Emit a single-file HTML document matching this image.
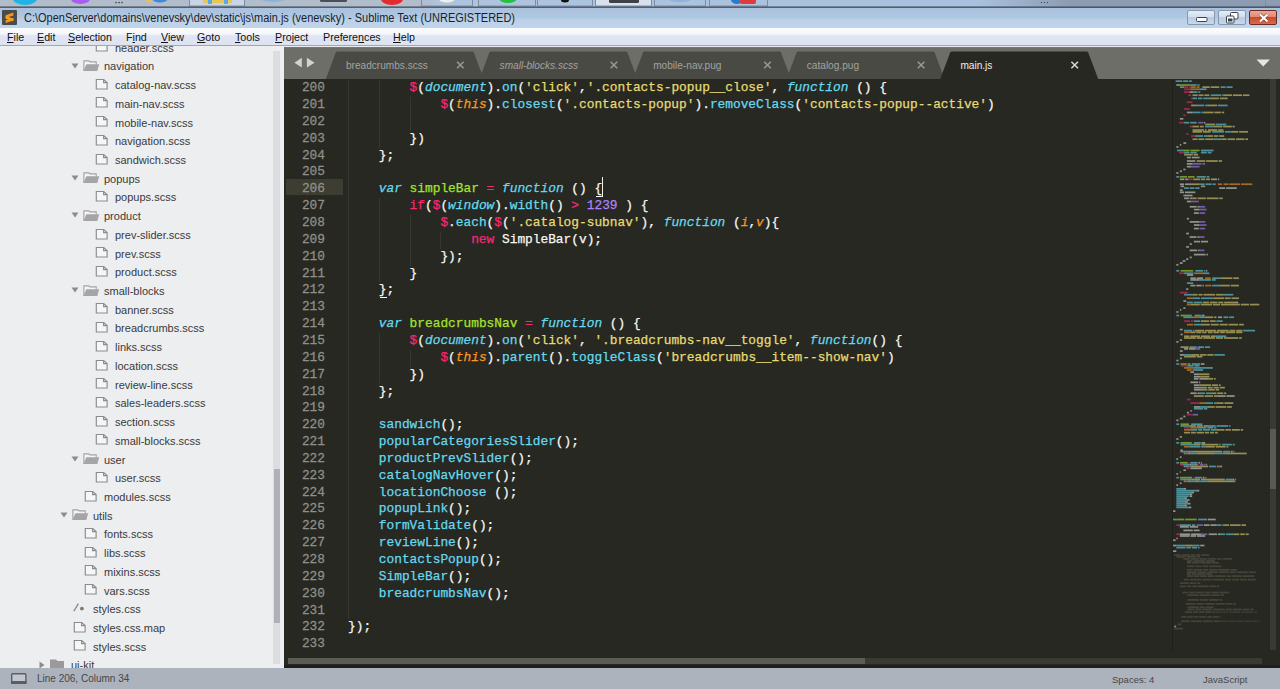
<!DOCTYPE html>
<html><head><meta charset="utf-8">
<style>
*{margin:0;padding:0;box-sizing:border-box}
html,body{width:1280px;height:689px;overflow:hidden;background:#272822;font-family:"Liberation Sans",sans-serif}
.a{position:absolute}
#taskbar{left:0;top:0;width:1280px;height:8px;background:linear-gradient(90deg,#b2bdcb 0,#b2bdcb 420px,#aec4de 440px,#a9c1de 980px,#8c9cb2 1070px,#8c9cb2 100%);overflow:hidden}
#title{left:0;top:8px;width:1280px;height:20px;background:linear-gradient(#a9c1dd,#b0c7e1 45%,#bcd1e8 60%,#c0d4ea)}
#title .t{left:24px;top:2.9px;font-size:12px;color:#1a1f2a;white-space:nowrap;line-height:15px;transform:scaleX(0.915);transform-origin:0 0}
#menu{left:0;top:28px;width:1280px;height:18px;background:linear-gradient(#fbfcfe,#f5f6fb 35%,#e2e6f3 45%,#dde2f1);border-bottom:1px solid #a3a7ae}
#menu span{position:absolute;top:2.4px;font-size:11.5px;line-height:14px;color:#111;white-space:nowrap;transform:scaleX(0.93);transform-origin:0 0}
#menu u{text-decoration:underline}
#side{left:0;top:46px;width:284px;height:622px;background:#edeef0;overflow:hidden}
#side .r{position:absolute;height:18.69px;line-height:18.69px;font-size:11px;color:#3a3a3a;white-space:nowrap}
#editor{left:284px;top:46px;width:996px;height:622px;background:#272822;overflow:hidden}
#tabs{left:0;top:0;width:996px;height:33px;background:#6b6b66}
#code{left:0;top:33px;width:996px;height:589px;background:#272822}
#status{left:0;top:668px;width:1280px;height:21px;background:#acb3bd}
#status span{position:absolute;top:4px;font-size:10px;line-height:13px;color:#474747;white-space:nowrap}
.ln{position:absolute;left:0;width:41px;text-align:right;font-family:"Liberation Mono",monospace;font-size:12.83px;line-height:16.85px;height:16.85px;color:#90908a;white-space:pre;transform:scaleY(1.04);-webkit-text-stroke:0.25px #90908a}
.cl{position:absolute;left:64px;font-family:"Liberation Mono",monospace;font-size:12.83px;line-height:16.85px;height:16.85px;color:#f8f8f2;white-space:pre;transform:scaleY(1.0)}
.cl span{-webkit-text-stroke:0.25px currentColor}
.tt{position:absolute;top:12.8px;font-size:10.1px;line-height:13px;white-space:nowrap}
.wb{position:absolute;top:10px;width:28px;height:15px;border:1px solid #8797ad;border-radius:2px;background:linear-gradient(#e4edf7,#d2dfee 45%,#b8cce3 50%,#c6d8ec)}
</style></head><body>
<div id="taskbar" class="a">
<svg class="a" style="left:0;top:0" width="1280" height="8" viewBox="0 0 1280 8">
<ellipse cx="25" cy="-2" rx="12.5" ry="7" fill="#20b4e4"/>
<ellipse cx="80.5" cy="-1" rx="9.5" ry="5" fill="#a95ef0"/>
<circle cx="116" cy="2.6" r="0.8" fill="#3a3f48"/><circle cx="119" cy="2.6" r="0.8" fill="#3a3f48"/><circle cx="122" cy="2.6" r="0.8" fill="#3a3f48"/>
<ellipse cx="149" cy="0" rx="3" ry="2.5" fill="#e8c050"/>
<ellipse cx="160" cy="-1" rx="7.5" ry="3.5" fill="#3a8ad8"/>
<rect x="189.5" y="-2" width="55" height="8" fill="#c8d5e4" stroke="#7d8ea4" stroke-width="1"/>
<rect x="203" y="0" width="29" height="3" fill="#e8c65a"/>
<rect x="208" y="0" width="4" height="4" fill="#5aa8e8"/><rect x="224" y="0" width="4" height="4" fill="#5aa8e8"/>
<ellipse cx="273" cy="-1" rx="12" ry="3" fill="#8fb2d6"/>
<rect x="320" y="-2" width="27" height="4" rx="1.5" fill="#4a4e56"/>
<ellipse cx="392" cy="-1" rx="11" ry="6" fill="#e52b2b"/>
<rect x="421.5" y="-2" width="51" height="8" fill="none" stroke="#7d8ea4"/>
<ellipse cx="447" cy="-1" rx="8" ry="3.5" fill="#eeeeee"/>
<rect x="478.5" y="-2" width="57" height="8" fill="none" stroke="#7d8ea4"/>
<ellipse cx="508" cy="-1" rx="8.5" ry="4" fill="#22c240"/>
<rect x="537.5" y="-2" width="55" height="8" fill="none" stroke="#7d8ea4"/>
<ellipse cx="565" cy="0" rx="4" ry="2.5" fill="#111"/>
<rect x="595.5" y="-2" width="56" height="8" fill="#d9e2ec" stroke="#7d8ea4"/>
<rect x="609" y="-2" width="30" height="5" rx="1.5" fill="#3e4248"/>
<rect x="654.5" y="-2" width="51" height="8" fill="none" stroke="#7d8ea4"/>
<ellipse cx="680" cy="-1" rx="12" ry="3" fill="#8fb2d6"/>
<rect x="709.5" y="-2" width="58" height="8" fill="none" stroke="#7d8ea4"/>
<ellipse cx="737" cy="0" rx="6" ry="4" fill="#2a7bd0"/>
<rect x="740" y="-2" width="16" height="6" rx="2" fill="#e03a3a"/>
<circle cx="1041.5" cy="2.6" r="0.7" fill="#3a3f48"/><circle cx="1044.5" cy="2.6" r="0.7" fill="#3a3f48"/><circle cx="1047.5" cy="2.6" r="0.7" fill="#3a3f48"/>
<rect x="1265.5" y="-2" width="20" height="8" fill="none" stroke="#7d8ea4"/>
<rect x="0" y="6.5" width="1280" height="1.3" fill="#3f4855"/>
</svg>
</div>
<div id="title" class="a">
<svg class="a" style="left:2px;top:1.5px" width="15" height="15" viewBox="0 0 15 15"><rect x="0" y="0" width="15" height="15" rx="1" fill="#4b4b4b"/><path d="M3.6 5.2L11.4 2.6V5.4L3.6 8Z" fill="#f29a1c"/><path d="M3.6 6.2L11.4 8.6V11.2L3.6 8.8Z" fill="#f5a623"/><path d="M3.6 10.2L11.4 7.8V10.4L3.6 13Z" fill="#f29a1c"/></svg>
<div class="a t">C:\OpenServer\domains\venevsky\dev\static\js\main.js (venevsky) - Sublime Text (UNREGISTERED)</div>
<div class="wb" style="left:1187px;top:2px"><svg class="a" style="left:8px;top:6px" width="12" height="5"><rect x="0.5" y="0.5" width="10.5" height="4" rx="1" fill="#fff" stroke="#3b4250"/></svg></div>
<div class="wb" style="left:1218px;top:2px"><svg class="a" style="left:7px;top:1px" width="13" height="12"><rect x="4.5" y="0.5" width="7.5" height="6.5" rx="1" fill="#fff" stroke="#3b4250"/><rect x="0.5" y="4" width="7.5" height="7" rx="1" fill="#fff" stroke="#3b4250"/><rect x="2" y="6.5" width="4.5" height="3" fill="#3b4250"/></svg></div>
<div class="wb" style="left:1249px;top:2px;border-color:#6b2a22;background:linear-gradient(#eca898,#e08a74 45%,#cc4a2c 50%,#d86a4a)"><svg class="a" style="left:8px;top:2px" width="12" height="10"><path d="M2 1.5L9.5 8.5M9.5 1.5L2 8.5" stroke="#6a3a30" stroke-width="3.4" stroke-opacity="0.7"/><path d="M2 1.5L9.5 8.5M9.5 1.5L2 8.5" stroke="#fff" stroke-width="2"/></svg></div>
</div>
<div id="menu" class="a">
<span style="left:7px"><u>F</u>ile</span>
<span style="left:37px"><u>E</u>dit</span>
<span style="left:68px"><u>S</u>election</span>
<span style="left:126px">F<u>i</u>nd</span>
<span style="left:161px"><u>V</u>iew</span>
<span style="left:197px"><u>G</u>oto</span>
<span style="left:235px"><u>T</u>ools</span>
<span style="left:275px"><u>P</u>roject</span>
<span style="left:323px">Prefere<u>n</u>ces</span>
<span style="left:393px"><u>H</u>elp</span>
</div>
<div id="side" class="a">
<svg class="a" width="14" height="12" viewBox="0 0 14 12" style="left:95px;top:-4.7px"><path d="M1.3 0.5H8.6L12.1 3.6V10H1.3Z" fill="#f6f6f6" stroke="#8c8c8c" stroke-width="1.15"/><path d="M8.6 0.5V3.6H12.1" fill="none" stroke="#8c8c8c" stroke-width="1.15"/></svg>
<div class="r" style="left:115px;top:-7.31px">header.scss</div>
<svg class="a" width="8" height="6" viewBox="0 0 8 6" style="left:71px;top:16.52px"><path d="M0.5 0.5H7.5L4 5.5Z" fill="#8c8c8c"/></svg>
<svg class="a" width="17" height="12" viewBox="0 0 17 12" style="left:83px;top:13.92px"><path d="M0.9 11V0.9H5.9L6.9 1.9H13.2V4.5" fill="#f4f4f4" stroke="#a2a2a4" stroke-width="1.1"/><path d="M3.3 4.3H16.2L14.3 11.1H0.5Z" fill="#a5a5a8"/></svg>
<div class="r" style="left:104px;top:11.41px">navigation</div>
<svg class="a" width="14" height="12" viewBox="0 0 14 12" style="left:95px;top:32.74px"><path d="M1.3 0.5H8.6L12.1 3.6V10H1.3Z" fill="#f6f6f6" stroke="#8c8c8c" stroke-width="1.15"/><path d="M8.6 0.5V3.6H12.1" fill="none" stroke="#8c8c8c" stroke-width="1.15"/></svg>
<div class="r" style="left:115px;top:30.13px">catalog-nav.scss</div>
<svg class="a" width="14" height="12" viewBox="0 0 14 12" style="left:95px;top:51.46px"><path d="M1.3 0.5H8.6L12.1 3.6V10H1.3Z" fill="#f6f6f6" stroke="#8c8c8c" stroke-width="1.15"/><path d="M8.6 0.5V3.6H12.1" fill="none" stroke="#8c8c8c" stroke-width="1.15"/></svg>
<div class="r" style="left:115px;top:48.85px">main-nav.scss</div>
<svg class="a" width="14" height="12" viewBox="0 0 14 12" style="left:95px;top:70.18px"><path d="M1.3 0.5H8.6L12.1 3.6V10H1.3Z" fill="#f6f6f6" stroke="#8c8c8c" stroke-width="1.15"/><path d="M8.6 0.5V3.6H12.1" fill="none" stroke="#8c8c8c" stroke-width="1.15"/></svg>
<div class="r" style="left:115px;top:67.57px">mobile-nav.scss</div>
<svg class="a" width="14" height="12" viewBox="0 0 14 12" style="left:95px;top:88.9px"><path d="M1.3 0.5H8.6L12.1 3.6V10H1.3Z" fill="#f6f6f6" stroke="#8c8c8c" stroke-width="1.15"/><path d="M8.6 0.5V3.6H12.1" fill="none" stroke="#8c8c8c" stroke-width="1.15"/></svg>
<div class="r" style="left:115px;top:86.29px">navigation.scss</div>
<svg class="a" width="14" height="12" viewBox="0 0 14 12" style="left:95px;top:107.62px"><path d="M1.3 0.5H8.6L12.1 3.6V10H1.3Z" fill="#f6f6f6" stroke="#8c8c8c" stroke-width="1.15"/><path d="M8.6 0.5V3.6H12.1" fill="none" stroke="#8c8c8c" stroke-width="1.15"/></svg>
<div class="r" style="left:115px;top:105.01px">sandwich.scss</div>
<svg class="a" width="8" height="6" viewBox="0 0 8 6" style="left:71px;top:128.84px"><path d="M0.5 0.5H7.5L4 5.5Z" fill="#8c8c8c"/></svg>
<svg class="a" width="17" height="12" viewBox="0 0 17 12" style="left:83px;top:126.24px"><path d="M0.9 11V0.9H5.9L6.9 1.9H13.2V4.5" fill="#f4f4f4" stroke="#a2a2a4" stroke-width="1.1"/><path d="M3.3 4.3H16.2L14.3 11.1H0.5Z" fill="#a5a5a8"/></svg>
<div class="r" style="left:104px;top:123.73px">popups</div>
<svg class="a" width="14" height="12" viewBox="0 0 14 12" style="left:95px;top:145.06px"><path d="M1.3 0.5H8.6L12.1 3.6V10H1.3Z" fill="#f6f6f6" stroke="#8c8c8c" stroke-width="1.15"/><path d="M8.6 0.5V3.6H12.1" fill="none" stroke="#8c8c8c" stroke-width="1.15"/></svg>
<div class="r" style="left:115px;top:142.45px">popups.scss</div>
<svg class="a" width="8" height="6" viewBox="0 0 8 6" style="left:71px;top:166.28px"><path d="M0.5 0.5H7.5L4 5.5Z" fill="#8c8c8c"/></svg>
<svg class="a" width="17" height="12" viewBox="0 0 17 12" style="left:83px;top:163.68px"><path d="M0.9 11V0.9H5.9L6.9 1.9H13.2V4.5" fill="#f4f4f4" stroke="#a2a2a4" stroke-width="1.1"/><path d="M3.3 4.3H16.2L14.3 11.1H0.5Z" fill="#a5a5a8"/></svg>
<div class="r" style="left:104px;top:161.17px">product</div>
<svg class="a" width="14" height="12" viewBox="0 0 14 12" style="left:95px;top:182.5px"><path d="M1.3 0.5H8.6L12.1 3.6V10H1.3Z" fill="#f6f6f6" stroke="#8c8c8c" stroke-width="1.15"/><path d="M8.6 0.5V3.6H12.1" fill="none" stroke="#8c8c8c" stroke-width="1.15"/></svg>
<div class="r" style="left:115px;top:179.89px">prev-slider.scss</div>
<svg class="a" width="14" height="12" viewBox="0 0 14 12" style="left:95px;top:201.22px"><path d="M1.3 0.5H8.6L12.1 3.6V10H1.3Z" fill="#f6f6f6" stroke="#8c8c8c" stroke-width="1.15"/><path d="M8.6 0.5V3.6H12.1" fill="none" stroke="#8c8c8c" stroke-width="1.15"/></svg>
<div class="r" style="left:115px;top:198.61px">prev.scss</div>
<svg class="a" width="14" height="12" viewBox="0 0 14 12" style="left:95px;top:219.94px"><path d="M1.3 0.5H8.6L12.1 3.6V10H1.3Z" fill="#f6f6f6" stroke="#8c8c8c" stroke-width="1.15"/><path d="M8.6 0.5V3.6H12.1" fill="none" stroke="#8c8c8c" stroke-width="1.15"/></svg>
<div class="r" style="left:115px;top:217.33px">product.scss</div>
<svg class="a" width="8" height="6" viewBox="0 0 8 6" style="left:71px;top:241.16px"><path d="M0.5 0.5H7.5L4 5.5Z" fill="#8c8c8c"/></svg>
<svg class="a" width="17" height="12" viewBox="0 0 17 12" style="left:83px;top:238.56px"><path d="M0.9 11V0.9H5.9L6.9 1.9H13.2V4.5" fill="#f4f4f4" stroke="#a2a2a4" stroke-width="1.1"/><path d="M3.3 4.3H16.2L14.3 11.1H0.5Z" fill="#a5a5a8"/></svg>
<div class="r" style="left:104px;top:236.05px">small-blocks</div>
<svg class="a" width="14" height="12" viewBox="0 0 14 12" style="left:95px;top:257.38px"><path d="M1.3 0.5H8.6L12.1 3.6V10H1.3Z" fill="#f6f6f6" stroke="#8c8c8c" stroke-width="1.15"/><path d="M8.6 0.5V3.6H12.1" fill="none" stroke="#8c8c8c" stroke-width="1.15"/></svg>
<div class="r" style="left:115px;top:254.77px">banner.scss</div>
<svg class="a" width="14" height="12" viewBox="0 0 14 12" style="left:95px;top:276.1px"><path d="M1.3 0.5H8.6L12.1 3.6V10H1.3Z" fill="#f6f6f6" stroke="#8c8c8c" stroke-width="1.15"/><path d="M8.6 0.5V3.6H12.1" fill="none" stroke="#8c8c8c" stroke-width="1.15"/></svg>
<div class="r" style="left:115px;top:273.49px">breadcrumbs.scss</div>
<svg class="a" width="14" height="12" viewBox="0 0 14 12" style="left:95px;top:294.82px"><path d="M1.3 0.5H8.6L12.1 3.6V10H1.3Z" fill="#f6f6f6" stroke="#8c8c8c" stroke-width="1.15"/><path d="M8.6 0.5V3.6H12.1" fill="none" stroke="#8c8c8c" stroke-width="1.15"/></svg>
<div class="r" style="left:115px;top:292.21px">links.scss</div>
<svg class="a" width="14" height="12" viewBox="0 0 14 12" style="left:95px;top:313.54px"><path d="M1.3 0.5H8.6L12.1 3.6V10H1.3Z" fill="#f6f6f6" stroke="#8c8c8c" stroke-width="1.15"/><path d="M8.6 0.5V3.6H12.1" fill="none" stroke="#8c8c8c" stroke-width="1.15"/></svg>
<div class="r" style="left:115px;top:310.93px">location.scss</div>
<svg class="a" width="14" height="12" viewBox="0 0 14 12" style="left:95px;top:332.26px"><path d="M1.3 0.5H8.6L12.1 3.6V10H1.3Z" fill="#f6f6f6" stroke="#8c8c8c" stroke-width="1.15"/><path d="M8.6 0.5V3.6H12.1" fill="none" stroke="#8c8c8c" stroke-width="1.15"/></svg>
<div class="r" style="left:115px;top:329.65px">review-line.scss</div>
<svg class="a" width="14" height="12" viewBox="0 0 14 12" style="left:95px;top:350.98px"><path d="M1.3 0.5H8.6L12.1 3.6V10H1.3Z" fill="#f6f6f6" stroke="#8c8c8c" stroke-width="1.15"/><path d="M8.6 0.5V3.6H12.1" fill="none" stroke="#8c8c8c" stroke-width="1.15"/></svg>
<div class="r" style="left:115px;top:348.37px">sales-leaders.scss</div>
<svg class="a" width="14" height="12" viewBox="0 0 14 12" style="left:95px;top:369.7px"><path d="M1.3 0.5H8.6L12.1 3.6V10H1.3Z" fill="#f6f6f6" stroke="#8c8c8c" stroke-width="1.15"/><path d="M8.6 0.5V3.6H12.1" fill="none" stroke="#8c8c8c" stroke-width="1.15"/></svg>
<div class="r" style="left:115px;top:367.09px">section.scss</div>
<svg class="a" width="14" height="12" viewBox="0 0 14 12" style="left:95px;top:388.42px"><path d="M1.3 0.5H8.6L12.1 3.6V10H1.3Z" fill="#f6f6f6" stroke="#8c8c8c" stroke-width="1.15"/><path d="M8.6 0.5V3.6H12.1" fill="none" stroke="#8c8c8c" stroke-width="1.15"/></svg>
<div class="r" style="left:115px;top:385.81px">small-blocks.scss</div>
<svg class="a" width="8" height="6" viewBox="0 0 8 6" style="left:71px;top:409.64px"><path d="M0.5 0.5H7.5L4 5.5Z" fill="#8c8c8c"/></svg>
<svg class="a" width="17" height="12" viewBox="0 0 17 12" style="left:83px;top:407.04px"><path d="M0.9 11V0.9H5.9L6.9 1.9H13.2V4.5" fill="#f4f4f4" stroke="#a2a2a4" stroke-width="1.1"/><path d="M3.3 4.3H16.2L14.3 11.1H0.5Z" fill="#a5a5a8"/></svg>
<div class="r" style="left:104px;top:404.53px">user</div>
<svg class="a" width="14" height="12" viewBox="0 0 14 12" style="left:95px;top:425.86px"><path d="M1.3 0.5H8.6L12.1 3.6V10H1.3Z" fill="#f6f6f6" stroke="#8c8c8c" stroke-width="1.15"/><path d="M8.6 0.5V3.6H12.1" fill="none" stroke="#8c8c8c" stroke-width="1.15"/></svg>
<div class="r" style="left:115px;top:423.25px">user.scss</div>
<svg class="a" width="14" height="12" viewBox="0 0 14 12" style="left:84px;top:444.58px"><path d="M1.3 0.5H8.6L12.1 3.6V10H1.3Z" fill="#f6f6f6" stroke="#8c8c8c" stroke-width="1.15"/><path d="M8.6 0.5V3.6H12.1" fill="none" stroke="#8c8c8c" stroke-width="1.15"/></svg>
<div class="r" style="left:104px;top:441.97px">modules.scss</div>
<svg class="a" width="8" height="6" viewBox="0 0 8 6" style="left:60px;top:465.8px"><path d="M0.5 0.5H7.5L4 5.5Z" fill="#8c8c8c"/></svg>
<svg class="a" width="17" height="12" viewBox="0 0 17 12" style="left:72px;top:463.2px"><path d="M0.9 11V0.9H5.9L6.9 1.9H13.2V4.5" fill="#f4f4f4" stroke="#a2a2a4" stroke-width="1.1"/><path d="M3.3 4.3H16.2L14.3 11.1H0.5Z" fill="#a5a5a8"/></svg>
<div class="r" style="left:93px;top:460.69px">utils</div>
<svg class="a" width="14" height="12" viewBox="0 0 14 12" style="left:84px;top:482.02px"><path d="M1.3 0.5H8.6L12.1 3.6V10H1.3Z" fill="#f6f6f6" stroke="#8c8c8c" stroke-width="1.15"/><path d="M8.6 0.5V3.6H12.1" fill="none" stroke="#8c8c8c" stroke-width="1.15"/></svg>
<div class="r" style="left:104px;top:479.41px">fonts.scss</div>
<svg class="a" width="14" height="12" viewBox="0 0 14 12" style="left:84px;top:500.74px"><path d="M1.3 0.5H8.6L12.1 3.6V10H1.3Z" fill="#f6f6f6" stroke="#8c8c8c" stroke-width="1.15"/><path d="M8.6 0.5V3.6H12.1" fill="none" stroke="#8c8c8c" stroke-width="1.15"/></svg>
<div class="r" style="left:104px;top:498.13px">libs.scss</div>
<svg class="a" width="14" height="12" viewBox="0 0 14 12" style="left:84px;top:519.46px"><path d="M1.3 0.5H8.6L12.1 3.6V10H1.3Z" fill="#f6f6f6" stroke="#8c8c8c" stroke-width="1.15"/><path d="M8.6 0.5V3.6H12.1" fill="none" stroke="#8c8c8c" stroke-width="1.15"/></svg>
<div class="r" style="left:104px;top:516.85px">mixins.scss</div>
<svg class="a" width="14" height="12" viewBox="0 0 14 12" style="left:84px;top:538.18px"><path d="M1.3 0.5H8.6L12.1 3.6V10H1.3Z" fill="#f6f6f6" stroke="#8c8c8c" stroke-width="1.15"/><path d="M8.6 0.5V3.6H12.1" fill="none" stroke="#8c8c8c" stroke-width="1.15"/></svg>
<div class="r" style="left:104px;top:535.57px">vars.scss</div>
<svg class="a" width="12" height="12" viewBox="0 0 12 12" style="left:73px;top:556.40px"><path d="M0.8 9.2L5.4 1.7" stroke="#8a8a8a" stroke-width="1.3"/><circle cx="8.9" cy="6.6" r="1.9" fill="#7a7a7a"/></svg>
<div class="r" style="left:93px;top:554.29px">styles.css</div>
<svg class="a" width="14" height="12" viewBox="0 0 14 12" style="left:73px;top:575.62px"><path d="M1.3 0.5H8.6L12.1 3.6V10H1.3Z" fill="#f6f6f6" stroke="#8c8c8c" stroke-width="1.15"/><path d="M8.6 0.5V3.6H12.1" fill="none" stroke="#8c8c8c" stroke-width="1.15"/></svg>
<div class="r" style="left:93px;top:573.01px">styles.css.map</div>
<svg class="a" width="14" height="12" viewBox="0 0 14 12" style="left:73px;top:594.34px"><path d="M1.3 0.5H8.6L12.1 3.6V10H1.3Z" fill="#f6f6f6" stroke="#8c8c8c" stroke-width="1.15"/><path d="M8.6 0.5V3.6H12.1" fill="none" stroke="#8c8c8c" stroke-width="1.15"/></svg>
<div class="r" style="left:93px;top:591.73px">styles.scss</div>
<svg class="a" width="6" height="8" viewBox="0 0 6 8" style="left:39px;top:614.56px"><path d="M0.5 0.5V7.5L5.5 4Z" fill="#8c8c8c"/></svg>
<svg class="a" width="15" height="12" viewBox="0 0 15 12" style="left:50px;top:612.56px"><path d="M0 0.5H6L7.5 2H14V12H0Z" fill="#9a9a9a"/></svg>
<div class="r" style="left:71px;top:610.45px">ui-kit</div>
<div class="a" style="left:273px;top:4.5px;width:7px;height:613px;background:#dcdde1"></div>
<div class="a" style="left:273.5px;top:423px;width:6px;height:154px;background:#afb1b6"></div>
</div>
<div id="editor" class="a">
<div id="tabs" class="a">
<svg class="a" style="left:0;top:0" width="996" height="33" viewBox="0 0 996 33">
<rect x="0" y="0" width="996" height="33" fill="#6e6e68"/>
<rect x="0" y="0" width="996" height="1" fill="#e9ebef"/><rect x="0" y="1" width="996" height="0.8" fill="#7a7b77"/>
<path d="M10.4 16.8L17.8 11.8V21.4Z" fill="#d2d2ce"/>
<path d="M30.6 16.8L22.9 11.8V21.4Z" fill="#d2d2ce"/>
<path d="M41.8 33L51.8 6.6Q52.3 5.4 53.8 5.4H187.8Q189.3 5.4 189.8 6.6L199.8 33Z" fill="#4a4a45"/>
<path d="M173.0 15.7L179.6 22.3M179.6 15.7L173.0 22.3" stroke="#9a9a95" stroke-width="1.5"/>
<path d="M195.4 33L205.4 6.6Q205.9 5.4 207.4 5.4H341.4Q342.9 5.4 343.4 6.6L353.4 33Z" fill="#4a4a45"/>
<path d="M326.6 15.7L333.2 22.3M333.2 15.7L326.6 22.3" stroke="#9a9a95" stroke-width="1.5"/>
<path d="M349.0 33L359.0 6.6Q359.5 5.4 361.0 5.4H495.0Q496.5 5.4 497.0 6.6L507.0 33Z" fill="#4a4a45"/>
<path d="M480.2 15.7L486.8 22.3M486.8 15.7L480.2 22.3" stroke="#9a9a95" stroke-width="1.5"/>
<path d="M502.6 33L512.6 6.6Q513.1 5.4 514.6 5.4H648.6Q650.1 5.4 650.6 6.6L660.6 33Z" fill="#4a4a45"/>
<path d="M633.8 15.7L640.4 22.3M640.4 15.7L633.8 22.3" stroke="#9a9a95" stroke-width="1.5"/>
<path d="M656.2 33L666.2 6.6Q666.7 5.4 668.2 5.4H802.2Q803.7 5.4 804.2 6.6L814.2 33Z" fill="#272822"/>
<path d="M787.4 15.7L794.0 22.3M794.0 15.7L787.4 22.3" stroke="#d8d8d4" stroke-width="1.5"/>
<path d="M972.5 13.5H986L979.2 20.5Z" fill="#e6e6e2"/>
</svg>
<div class="tt" style="left:62.0px;color:#a3a39e">breadcrumbs.scss</div>
<div class="tt" style="left:215.6px;color:#a3a39e;font-style:italic">small-blocks.scss</div>
<div class="tt" style="left:369.2px;color:#a3a39e">mobile-nav.pug</div>
<div class="tt" style="left:522.8px;color:#a3a39e">catalog.pug</div>
<div class="tt" style="left:676.4px;color:#f0f0ec">main.js</div>
</div>
<div id="code" class="a"></div>
<div class="a" style="left:64.0px;top:34.20px;width:1px;height:539.20px;background:#363731"></div>
<div class="a" style="left:94.8px;top:34.20px;width:1px;height:67.40px;background:#363731"></div>
<div class="a" style="left:94.8px;top:152.15px;width:1px;height:84.25px;background:#363731"></div>
<div class="a" style="left:94.8px;top:286.95px;width:1px;height:50.55px;background:#363731"></div>
<div class="a" style="left:125.6px;top:51.05px;width:1px;height:33.70px;background:#363731"></div>
<div class="a" style="left:125.6px;top:169.00px;width:1px;height:50.55px;background:#363731"></div>
<div class="a" style="left:125.6px;top:303.80px;width:1px;height:16.85px;background:#363731"></div>
<div class="a" style="left:156.4px;top:185.85px;width:1px;height:16.85px;background:#363731"></div>
<div class="ln" style="top:34.20px">200</div>
<div class="cl" style="top:34.20px"><span style="color:#f8f8f2">        </span><span style="color:#f92672">$</span><span style="color:#f8f8f2">(</span><span style="color:#66d9ef;font-style:italic">document</span><span style="color:#f8f8f2">).</span><span style="color:#66d9ef">on</span><span style="color:#f8f8f2">(</span><span style="color:#e6db74">&#x27;click&#x27;</span><span style="color:#f8f8f2">,</span><span style="color:#e6db74">&#x27;.contacts-popup__close&#x27;</span><span style="color:#f8f8f2">, </span><span style="color:#66d9ef;font-style:italic">function</span><span style="color:#f8f8f2"> () {</span></div>
<div class="ln" style="top:51.05px">201</div>
<div class="cl" style="top:51.05px"><span style="color:#f8f8f2">            </span><span style="color:#f92672">$</span><span style="color:#f8f8f2">(</span><span style="color:#fd971f;font-style:italic">this</span><span style="color:#f8f8f2">).</span><span style="color:#66d9ef">closest</span><span style="color:#f8f8f2">(</span><span style="color:#e6db74">&#x27;.contacts-popup&#x27;</span><span style="color:#f8f8f2">).</span><span style="color:#66d9ef">removeClass</span><span style="color:#f8f8f2">(</span><span style="color:#e6db74">&#x27;contacts-popup--active&#x27;</span><span style="color:#f8f8f2">)</span></div>
<div class="ln" style="top:67.90px">202</div>
<div class="cl" style="top:67.90px"></div>
<div class="ln" style="top:84.75px">203</div>
<div class="cl" style="top:84.75px"><span style="color:#f8f8f2">        })</span></div>
<div class="ln" style="top:101.60px">204</div>
<div class="cl" style="top:101.60px"><span style="color:#f8f8f2">    };</span></div>
<div class="ln" style="top:118.45px">205</div>
<div class="cl" style="top:118.45px"></div>
<div class="a" style="left:1.5px;top:132.80px;width:57.5px;height:16.6px;background:#3e3d32"></div>
<div class="ln" style="top:135.30px">206</div>
<div class="cl" style="top:135.30px"><span style="color:#f8f8f2">    </span><span style="color:#66d9ef;font-style:italic">var</span><span style="color:#f8f8f2"> </span><span style="color:#a6e22e">simpleBar</span><span style="color:#f8f8f2"> </span><span style="color:#f92672">=</span><span style="color:#f8f8f2"> </span><span style="color:#66d9ef;font-style:italic">function</span><span style="color:#f8f8f2"> () {</span></div>
<div class="ln" style="top:152.15px">207</div>
<div class="cl" style="top:152.15px"><span style="color:#f8f8f2">        </span><span style="color:#f92672">if</span><span style="color:#f8f8f2">(</span><span style="color:#f92672">$</span><span style="color:#f8f8f2">(</span><span style="color:#66d9ef;font-style:italic">window</span><span style="color:#f8f8f2">).</span><span style="color:#66d9ef">width</span><span style="color:#f8f8f2">() </span><span style="color:#f92672">&gt;</span><span style="color:#f8f8f2"> </span><span style="color:#ae81ff">1239</span><span style="color:#f8f8f2"> ) {</span></div>
<div class="ln" style="top:169.00px">208</div>
<div class="cl" style="top:169.00px"><span style="color:#f8f8f2">            </span><span style="color:#f92672">$</span><span style="color:#f8f8f2">.</span><span style="color:#66d9ef">each</span><span style="color:#f8f8f2">(</span><span style="color:#f92672">$</span><span style="color:#f8f8f2">(</span><span style="color:#e6db74">&#x27;.catalog-subnav&#x27;</span><span style="color:#f8f8f2">), </span><span style="color:#66d9ef;font-style:italic">function</span><span style="color:#f8f8f2"> (</span><span style="color:#fd971f;font-style:italic">i</span><span style="color:#f8f8f2">,</span><span style="color:#fd971f;font-style:italic">v</span><span style="color:#f8f8f2">){</span></div>
<div class="ln" style="top:185.85px">209</div>
<div class="cl" style="top:185.85px"><span style="color:#f8f8f2">                </span><span style="color:#f92672">new</span><span style="color:#f8f8f2"> SimpleBar(v);</span></div>
<div class="ln" style="top:202.70px">210</div>
<div class="cl" style="top:202.70px"><span style="color:#f8f8f2">            });</span></div>
<div class="ln" style="top:219.55px">211</div>
<div class="cl" style="top:219.55px"><span style="color:#f8f8f2">        }</span></div>
<div class="ln" style="top:236.40px">212</div>
<div class="cl" style="top:236.40px"><span style="color:#f8f8f2">    };</span></div>
<div class="ln" style="top:253.25px">213</div>
<div class="cl" style="top:253.25px"></div>
<div class="ln" style="top:270.10px">214</div>
<div class="cl" style="top:270.10px"><span style="color:#f8f8f2">    </span><span style="color:#66d9ef;font-style:italic">var</span><span style="color:#f8f8f2"> </span><span style="color:#a6e22e">breadcrumbsNav</span><span style="color:#f8f8f2"> </span><span style="color:#f92672">=</span><span style="color:#f8f8f2"> </span><span style="color:#66d9ef;font-style:italic">function</span><span style="color:#f8f8f2"> () {</span></div>
<div class="ln" style="top:286.95px">215</div>
<div class="cl" style="top:286.95px"><span style="color:#f8f8f2">        </span><span style="color:#f92672">$</span><span style="color:#f8f8f2">(</span><span style="color:#66d9ef;font-style:italic">document</span><span style="color:#f8f8f2">).</span><span style="color:#66d9ef">on</span><span style="color:#f8f8f2">(</span><span style="color:#e6db74">&#x27;click&#x27;</span><span style="color:#f8f8f2">, </span><span style="color:#e6db74">&#x27;.breadcrumbs-nav__toggle&#x27;</span><span style="color:#f8f8f2">, </span><span style="color:#66d9ef;font-style:italic">function</span><span style="color:#f8f8f2">() {</span></div>
<div class="ln" style="top:303.80px">216</div>
<div class="cl" style="top:303.80px"><span style="color:#f8f8f2">            </span><span style="color:#f92672">$</span><span style="color:#f8f8f2">(</span><span style="color:#fd971f;font-style:italic">this</span><span style="color:#f8f8f2">).</span><span style="color:#66d9ef">parent</span><span style="color:#f8f8f2">().</span><span style="color:#66d9ef">toggleClass</span><span style="color:#f8f8f2">(</span><span style="color:#e6db74">&#x27;breadcrumbs__item--show-nav&#x27;</span><span style="color:#f8f8f2">)</span></div>
<div class="ln" style="top:320.65px">217</div>
<div class="cl" style="top:320.65px"><span style="color:#f8f8f2">        })</span></div>
<div class="ln" style="top:337.50px">218</div>
<div class="cl" style="top:337.50px"><span style="color:#f8f8f2">    };</span></div>
<div class="ln" style="top:354.35px">219</div>
<div class="cl" style="top:354.35px"></div>
<div class="ln" style="top:371.20px">220</div>
<div class="cl" style="top:371.20px"><span style="color:#f8f8f2">    </span><span style="color:#66d9ef">sandwich</span><span style="color:#f8f8f2">();</span></div>
<div class="ln" style="top:388.05px">221</div>
<div class="cl" style="top:388.05px"><span style="color:#f8f8f2">    </span><span style="color:#66d9ef">popularCategoriesSlider</span><span style="color:#f8f8f2">();</span></div>
<div class="ln" style="top:404.90px">222</div>
<div class="cl" style="top:404.90px"><span style="color:#f8f8f2">    </span><span style="color:#66d9ef">productPrevSlider</span><span style="color:#f8f8f2">();</span></div>
<div class="ln" style="top:421.75px">223</div>
<div class="cl" style="top:421.75px"><span style="color:#f8f8f2">    </span><span style="color:#66d9ef">catalogNavHover</span><span style="color:#f8f8f2">();</span></div>
<div class="ln" style="top:438.60px">224</div>
<div class="cl" style="top:438.60px"><span style="color:#f8f8f2">    </span><span style="color:#66d9ef">locationChoose</span><span style="color:#f8f8f2"> ();</span></div>
<div class="ln" style="top:455.45px">225</div>
<div class="cl" style="top:455.45px"><span style="color:#f8f8f2">    </span><span style="color:#66d9ef">popupLink</span><span style="color:#f8f8f2">();</span></div>
<div class="ln" style="top:472.30px">226</div>
<div class="cl" style="top:472.30px"><span style="color:#f8f8f2">    </span><span style="color:#66d9ef">formValidate</span><span style="color:#f8f8f2">();</span></div>
<div class="ln" style="top:489.15px">227</div>
<div class="cl" style="top:489.15px"><span style="color:#f8f8f2">    </span><span style="color:#66d9ef">reviewLine</span><span style="color:#f8f8f2">();</span></div>
<div class="ln" style="top:506.00px">228</div>
<div class="cl" style="top:506.00px"><span style="color:#f8f8f2">    </span><span style="color:#66d9ef">contactsPopup</span><span style="color:#f8f8f2">();</span></div>
<div class="ln" style="top:522.85px">229</div>
<div class="cl" style="top:522.85px"><span style="color:#f8f8f2">    </span><span style="color:#66d9ef">SimpleBar</span><span style="color:#f8f8f2">();</span></div>
<div class="ln" style="top:539.70px">230</div>
<div class="cl" style="top:539.70px"><span style="color:#f8f8f2">    </span><span style="color:#66d9ef">breadcrumbsNav</span><span style="color:#f8f8f2">();</span></div>
<div class="ln" style="top:556.55px">231</div>
<div class="cl" style="top:556.55px"></div>
<div class="ln" style="top:573.40px">232</div>
<div class="cl" style="top:573.40px"><span style="color:#f8f8f2">});</span></div>
<div class="ln" style="top:590.25px">233</div>
<div class="cl" style="top:590.25px"></div>
<div class="a" style="left:317.9px;top:131.30px;width:1.6px;height:20px;background:#f0f0ea"></div>
<div class="a" style="left:311.9px;top:150.10px;width:7px;height:1px;background:#f8f8f2"></div>
<div class="a" style="left:96.3px;top:251.20px;width:7px;height:1px;background:#f8f8f2"></div>
<svg class="a" style="left:0;top:0" width="996" height="622" viewBox="0 0 996 622"><rect x="891.63" y="34.31" width="6.59" height="1.70" fill="#66d9ef" fill-opacity="0.60"/><rect x="899.10" y="34.31" width="5.21" height="1.70" fill="#66d9ef" fill-opacity="0.60"/><rect x="905.18" y="34.31" width="2.62" height="1.70" fill="#66d9ef" fill-opacity="0.60"/><rect x="892.33" y="38.18" width="3.52" height="1.70" fill="#f8f8f2" fill-opacity="0.52"/><rect x="895.85" y="38.18" width="9.85" height="1.70" fill="#a6e22e" fill-opacity="0.60"/><rect x="905.69" y="38.18" width="6.93" height="1.70" fill="#66d9ef" fill-opacity="0.60"/><rect x="913.50" y="38.18" width="2.04" height="1.70" fill="#66d9ef" fill-opacity="0.60"/><rect x="895.85" y="40.29" width="4.22" height="1.70" fill="#66d9ef" fill-opacity="0.60"/><rect x="900.06" y="40.29" width="4.30" height="1.70" fill="#f92672" fill-opacity="0.60"/><rect x="905.24" y="40.29" width="1.85" height="1.70" fill="#f92672" fill-opacity="0.60"/><rect x="907.10" y="40.29" width="4.56" height="1.70" fill="#fd971f" fill-opacity="0.60"/><rect x="912.54" y="40.29" width="3.00" height="1.70" fill="#fd971f" fill-opacity="0.60"/><rect x="918.35" y="40.29" width="7.40" height="1.70" fill="#e6db74" fill-opacity="0.58"/><rect x="926.62" y="40.29" width="8.60" height="1.70" fill="#e6db74" fill-opacity="0.58"/><rect x="936.63" y="40.29" width="4.99" height="1.70" fill="#66d9ef" fill-opacity="0.60"/><rect x="942.50" y="40.29" width="6.08" height="1.70" fill="#66d9ef" fill-opacity="0.60"/><rect x="900.06" y="42.40" width="6.33" height="1.70" fill="#f92672" fill-opacity="0.60"/><rect x="906.39" y="42.40" width="9.14" height="1.70" fill="#fd971f" fill-opacity="0.60"/><rect x="915.54" y="42.40" width="7.03" height="1.70" fill="#66d9ef" fill-opacity="0.60"/><rect x="900.06" y="45.21" width="5.63" height="1.70" fill="#f92672" fill-opacity="0.60"/><rect x="905.69" y="45.21" width="3.52" height="1.70" fill="#f8f8f2" fill-opacity="0.52"/><rect x="909.21" y="45.21" width="4.37" height="1.70" fill="#66d9ef" fill-opacity="0.60"/><rect x="914.46" y="45.21" width="1.78" height="1.70" fill="#66d9ef" fill-opacity="0.60"/><rect x="904.28" y="48.38" width="2.81" height="1.70" fill="#f92672" fill-opacity="0.60"/><rect x="908.50" y="48.38" width="5.15" height="1.70" fill="#e6db74" fill-opacity="0.58"/><rect x="914.54" y="48.38" width="4.94" height="1.70" fill="#e6db74" fill-opacity="0.58"/><rect x="920.36" y="48.38" width="5.02" height="1.70" fill="#e6db74" fill-opacity="0.58"/><rect x="926.79" y="48.38" width="10.53" height="1.70" fill="#66d9ef" fill-opacity="0.60"/><rect x="938.20" y="48.38" width="1.25" height="1.70" fill="#66d9ef" fill-opacity="0.60"/><rect x="939.45" y="48.38" width="8.65" height="1.70" fill="#e6db74" fill-opacity="0.58"/><rect x="948.98" y="48.38" width="9.11" height="1.70" fill="#e6db74" fill-opacity="0.58"/><rect x="958.97" y="48.38" width="6.50" height="1.70" fill="#e6db74" fill-opacity="0.58"/><rect x="907.10" y="51.54" width="1.41" height="1.70" fill="#f92672" fill-opacity="0.60"/><rect x="908.50" y="51.54" width="4.50" height="1.70" fill="#66d9ef" fill-opacity="0.60"/><rect x="913.89" y="51.54" width="4.48" height="1.70" fill="#66d9ef" fill-opacity="0.60"/><rect x="919.24" y="51.54" width="6.14" height="1.70" fill="#66d9ef" fill-opacity="0.60"/><rect x="925.38" y="51.54" width="9.44" height="1.70" fill="#e6db74" fill-opacity="0.58"/><rect x="935.70" y="51.54" width="7.96" height="1.70" fill="#e6db74" fill-opacity="0.58"/><rect x="902.88" y="55.41" width="5.63" height="1.70" fill="#f92672" fill-opacity="0.60"/><rect x="907.10" y="58.58" width="5.63" height="1.70" fill="#e6db74" fill-opacity="0.58"/><rect x="912.72" y="58.58" width="7.63" height="1.70" fill="#66d9ef" fill-opacity="0.60"/><rect x="921.23" y="58.58" width="2.75" height="1.70" fill="#66d9ef" fill-opacity="0.60"/><rect x="923.97" y="58.58" width="9.14" height="1.70" fill="#e6db74" fill-opacity="0.58"/><rect x="933.82" y="58.58" width="9.85" height="1.70" fill="#66d9ef" fill-opacity="0.60"/><rect x="900.06" y="62.09" width="5.63" height="1.70" fill="#f92672" fill-opacity="0.60"/><rect x="902.88" y="65.61" width="5.63" height="1.70" fill="#f8f8f2" fill-opacity="0.52"/><rect x="908.50" y="65.61" width="8.20" height="1.70" fill="#66d9ef" fill-opacity="0.60"/><rect x="917.59" y="65.61" width="2.17" height="1.70" fill="#66d9ef" fill-opacity="0.60"/><rect x="919.76" y="65.61" width="9.84" height="1.70" fill="#e6db74" fill-opacity="0.58"/><rect x="930.47" y="65.61" width="6.30" height="1.70" fill="#e6db74" fill-opacity="0.58"/><rect x="937.65" y="65.61" width="2.49" height="1.70" fill="#e6db74" fill-opacity="0.58"/><rect x="899.36" y="68.42" width="2.11" height="1.70" fill="#f92672" fill-opacity="0.60"/><rect x="895.85" y="71.96" width="3.52" height="1.70" fill="#f8f8f2" fill-opacity="0.52"/><rect x="895.14" y="75.83" width="4.92" height="1.70" fill="#f92672" fill-opacity="0.60"/><rect x="900.06" y="75.83" width="5.22" height="1.70" fill="#66d9ef" fill-opacity="0.60"/><rect x="906.16" y="75.83" width="6.56" height="1.70" fill="#66d9ef" fill-opacity="0.60"/><rect x="914.13" y="75.83" width="4.92" height="1.70" fill="#ae81ff" fill-opacity="0.60"/><rect x="919.76" y="75.83" width="1.41" height="1.70" fill="#f8f8f2" fill-opacity="0.52"/><rect x="921.16" y="77.59" width="9.85" height="1.70" fill="#e6db74" fill-opacity="0.58"/><rect x="931.71" y="77.59" width="10.55" height="1.70" fill="#66d9ef" fill-opacity="0.60"/><rect x="905.69" y="79.70" width="2.81" height="1.70" fill="#f92672" fill-opacity="0.60"/><rect x="908.50" y="79.70" width="6.51" height="1.70" fill="#e6db74" fill-opacity="0.58"/><rect x="915.89" y="79.70" width="3.86" height="1.70" fill="#e6db74" fill-opacity="0.58"/><rect x="921.16" y="79.70" width="8.44" height="1.70" fill="#66d9ef" fill-opacity="0.60"/><rect x="929.60" y="79.70" width="8.64" height="1.70" fill="#e6db74" fill-opacity="0.58"/><rect x="939.12" y="79.70" width="8.76" height="1.70" fill="#e6db74" fill-opacity="0.58"/><rect x="948.59" y="79.70" width="2.11" height="1.70" fill="#f8f8f2" fill-opacity="0.52"/><rect x="908.50" y="83.21" width="11.56" height="1.70" fill="#e6db74" fill-opacity="0.58"/><rect x="920.94" y="83.21" width="1.63" height="1.70" fill="#e6db74" fill-opacity="0.58"/><rect x="923.97" y="83.21" width="9.31" height="1.70" fill="#e6db74" fill-opacity="0.58"/><rect x="934.17" y="83.21" width="5.28" height="1.70" fill="#e6db74" fill-opacity="0.58"/><rect x="908.50" y="84.97" width="9.61" height="1.70" fill="#e6db74" fill-opacity="0.58"/><rect x="919.00" y="84.97" width="7.79" height="1.70" fill="#e6db74" fill-opacity="0.58"/><rect x="928.19" y="84.97" width="11.94" height="1.70" fill="#66d9ef" fill-opacity="0.60"/><rect x="941.02" y="84.97" width="6.87" height="1.70" fill="#66d9ef" fill-opacity="0.60"/><rect x="947.88" y="84.97" width="6.28" height="1.70" fill="#e6db74" fill-opacity="0.58"/><rect x="955.04" y="84.97" width="9.02" height="1.70" fill="#e6db74" fill-opacity="0.58"/><rect x="902.17" y="87.08" width="2.11" height="1.70" fill="#f92672" fill-opacity="0.60"/><rect x="907.10" y="89.19" width="4.22" height="1.70" fill="#f92672" fill-opacity="0.60"/><rect x="911.32" y="89.19" width="7.69" height="1.70" fill="#66d9ef" fill-opacity="0.60"/><rect x="919.89" y="89.19" width="4.08" height="1.70" fill="#66d9ef" fill-opacity="0.60"/><rect x="923.97" y="89.19" width="4.94" height="1.70" fill="#e6db74" fill-opacity="0.58"/><rect x="929.79" y="89.19" width="4.47" height="1.70" fill="#e6db74" fill-opacity="0.58"/><rect x="935.14" y="89.19" width="5.01" height="1.70" fill="#e6db74" fill-opacity="0.58"/><rect x="908.50" y="92.36" width="5.03" height="1.70" fill="#e6db74" fill-opacity="0.58"/><rect x="914.42" y="92.36" width="5.98" height="1.70" fill="#e6db74" fill-opacity="0.58"/><rect x="921.28" y="92.36" width="8.32" height="1.70" fill="#e6db74" fill-opacity="0.58"/><rect x="929.60" y="92.36" width="8.44" height="1.70" fill="#66d9ef" fill-opacity="0.60"/><rect x="938.04" y="92.36" width="4.64" height="1.70" fill="#e6db74" fill-opacity="0.58"/><rect x="943.56" y="92.36" width="7.59" height="1.70" fill="#e6db74" fill-opacity="0.58"/><rect x="952.04" y="92.36" width="8.40" height="1.70" fill="#e6db74" fill-opacity="0.58"/><rect x="961.31" y="92.36" width="2.75" height="1.70" fill="#e6db74" fill-opacity="0.58"/><rect x="899.36" y="96.22" width="2.81" height="1.70" fill="#f8f8f2" fill-opacity="0.52"/><rect x="895.85" y="97.98" width="1.41" height="1.70" fill="#f8f8f2" fill-opacity="0.52"/><rect x="892.33" y="100.09" width="2.11" height="1.70" fill="#f8f8f2" fill-opacity="0.52"/><rect x="893.03" y="103.61" width="5.63" height="1.70" fill="#66d9ef" fill-opacity="0.60"/><rect x="898.66" y="103.61" width="6.87" height="1.70" fill="#a6e22e" fill-opacity="0.60"/><rect x="906.41" y="103.61" width="9.13" height="1.70" fill="#a6e22e" fill-opacity="0.60"/><rect x="916.94" y="103.61" width="12.66" height="1.70" fill="#66d9ef" fill-opacity="0.60"/><rect x="895.14" y="105.72" width="4.92" height="1.70" fill="#f92672" fill-opacity="0.60"/><rect x="900.06" y="105.72" width="5.41" height="1.70" fill="#66d9ef" fill-opacity="0.60"/><rect x="906.35" y="105.72" width="6.37" height="1.70" fill="#66d9ef" fill-opacity="0.60"/><rect x="916.94" y="105.72" width="5.87" height="1.70" fill="#66d9ef" fill-opacity="0.60"/><rect x="923.69" y="105.72" width="3.80" height="1.70" fill="#66d9ef" fill-opacity="0.60"/><rect x="900.06" y="107.83" width="8.71" height="1.70" fill="#e6db74" fill-opacity="0.58"/><rect x="909.66" y="107.83" width="4.47" height="1.70" fill="#e6db74" fill-opacity="0.58"/><rect x="902.88" y="110.67" width="4.03" height="1.70" fill="#f8f8f2" fill-opacity="0.52"/><rect x="907.79" y="110.67" width="7.75" height="1.70" fill="#f8f8f2" fill-opacity="0.52"/><rect x="902.88" y="114.18" width="8.44" height="1.70" fill="#f8f8f2" fill-opacity="0.52"/><rect x="912.72" y="114.18" width="8.53" height="1.70" fill="#e6db74" fill-opacity="0.58"/><rect x="922.13" y="114.18" width="11.62" height="1.70" fill="#e6db74" fill-opacity="0.58"/><rect x="934.64" y="114.18" width="3.40" height="1.70" fill="#e6db74" fill-opacity="0.58"/><rect x="902.88" y="117.00" width="5.63" height="1.70" fill="#f8f8f2" fill-opacity="0.52"/><rect x="908.50" y="117.00" width="8.94" height="1.70" fill="#ae81ff" fill-opacity="0.60"/><rect x="918.32" y="117.00" width="2.84" height="1.70" fill="#ae81ff" fill-opacity="0.60"/><rect x="902.88" y="119.81" width="4.22" height="1.70" fill="#f8f8f2" fill-opacity="0.52"/><rect x="907.10" y="119.81" width="8.44" height="1.70" fill="#ae81ff" fill-opacity="0.60"/><rect x="899.36" y="122.62" width="2.11" height="1.70" fill="#f8f8f2" fill-opacity="0.52"/><rect x="895.85" y="124.38" width="2.11" height="1.70" fill="#f8f8f2" fill-opacity="0.52"/><rect x="892.33" y="126.14" width="2.11" height="1.70" fill="#f8f8f2" fill-opacity="0.52"/><rect x="892.33" y="130.01" width="2.81" height="1.70" fill="#66d9ef" fill-opacity="0.60"/><rect x="895.85" y="130.01" width="7.19" height="1.70" fill="#a6e22e" fill-opacity="0.60"/><rect x="903.92" y="130.01" width="6.70" height="1.70" fill="#a6e22e" fill-opacity="0.60"/><rect x="912.72" y="130.01" width="9.07" height="1.70" fill="#66d9ef" fill-opacity="0.60"/><rect x="922.68" y="130.01" width="2.70" height="1.70" fill="#66d9ef" fill-opacity="0.60"/><rect x="895.85" y="132.47" width="4.54" height="1.70" fill="#f8f8f2" fill-opacity="0.52"/><rect x="901.26" y="132.47" width="3.02" height="1.70" fill="#f8f8f2" fill-opacity="0.52"/><rect x="904.28" y="132.47" width="4.22" height="1.70" fill="#f92672" fill-opacity="0.60"/><rect x="909.21" y="132.47" width="6.72" height="1.70" fill="#e6db74" fill-opacity="0.58"/><rect x="916.81" y="132.47" width="4.42" height="1.70" fill="#e6db74" fill-opacity="0.58"/><rect x="922.11" y="132.47" width="4.00" height="1.70" fill="#e6db74" fill-opacity="0.58"/><rect x="926.99" y="132.47" width="1.20" height="1.70" fill="#e6db74" fill-opacity="0.58"/><rect x="928.19" y="132.47" width="4.81" height="1.70" fill="#f8f8f2" fill-opacity="0.52"/><rect x="933.89" y="132.47" width="1.34" height="1.70" fill="#f8f8f2" fill-opacity="0.52"/><rect x="895.85" y="137.39" width="4.20" height="1.70" fill="#f8f8f2" fill-opacity="0.52"/><rect x="900.93" y="137.39" width="6.17" height="1.70" fill="#f8f8f2" fill-opacity="0.52"/><rect x="907.10" y="137.39" width="8.44" height="1.70" fill="#e6db74" fill-opacity="0.58"/><rect x="915.54" y="137.39" width="5.19" height="1.70" fill="#66d9ef" fill-opacity="0.60"/><rect x="921.60" y="137.39" width="6.02" height="1.70" fill="#66d9ef" fill-opacity="0.60"/><rect x="928.50" y="137.39" width="3.21" height="1.70" fill="#66d9ef" fill-opacity="0.60"/><rect x="933.82" y="137.39" width="4.22" height="1.70" fill="#fd971f" fill-opacity="0.60"/><rect x="939.45" y="137.39" width="4.98" height="1.70" fill="#fd971f" fill-opacity="0.60"/><rect x="945.31" y="137.39" width="10.79" height="1.70" fill="#fd971f" fill-opacity="0.60"/><rect x="956.98" y="137.39" width="11.30" height="1.70" fill="#fd971f" fill-opacity="0.60"/><rect x="896.55" y="139.50" width="3.52" height="1.70" fill="#f8f8f2" fill-opacity="0.52"/><rect x="916.94" y="139.50" width="4.22" height="1.70" fill="#e6db74" fill-opacity="0.58"/><rect x="900.06" y="141.26" width="4.69" height="1.70" fill="#66d9ef" fill-opacity="0.60"/><rect x="905.63" y="141.26" width="4.82" height="1.70" fill="#66d9ef" fill-opacity="0.60"/><rect x="911.33" y="141.26" width="4.21" height="1.70" fill="#66d9ef" fill-opacity="0.60"/><rect x="935.23" y="141.26" width="6.12" height="1.70" fill="#f8f8f2" fill-opacity="0.52"/><rect x="942.22" y="141.26" width="10.58" height="1.70" fill="#f8f8f2" fill-opacity="0.52"/><rect x="895.85" y="143.37" width="2.81" height="1.70" fill="#f8f8f2" fill-opacity="0.52"/><rect x="895.85" y="145.48" width="4.18" height="1.70" fill="#f8f8f2" fill-opacity="0.52"/><rect x="900.91" y="145.48" width="10.41" height="1.70" fill="#f8f8f2" fill-opacity="0.52"/><rect x="899.36" y="148.67" width="9.14" height="1.70" fill="#f8f8f2" fill-opacity="0.52"/><rect x="900.06" y="151.48" width="5.17" height="1.70" fill="#f8f8f2" fill-opacity="0.52"/><rect x="906.12" y="151.48" width="2.39" height="1.70" fill="#f8f8f2" fill-opacity="0.52"/><rect x="908.50" y="151.48" width="4.22" height="1.70" fill="#e6db74" fill-opacity="0.58"/><rect x="913.60" y="151.48" width="8.22" height="1.70" fill="#e6db74" fill-opacity="0.58"/><rect x="922.70" y="151.48" width="11.83" height="1.70" fill="#e6db74" fill-opacity="0.58"/><rect x="935.41" y="151.48" width="3.33" height="1.70" fill="#e6db74" fill-opacity="0.58"/><rect x="902.88" y="154.64" width="4.22" height="1.70" fill="#f8f8f2" fill-opacity="0.52"/><rect x="907.10" y="154.64" width="7.74" height="1.70" fill="#ae81ff" fill-opacity="0.60"/><rect x="905.69" y="159.92" width="6.93" height="1.70" fill="#f8f8f2" fill-opacity="0.52"/><rect x="913.50" y="159.92" width="2.03" height="1.70" fill="#f8f8f2" fill-opacity="0.52"/><rect x="915.54" y="159.92" width="5.63" height="1.70" fill="#ae81ff" fill-opacity="0.60"/><rect x="909.91" y="162.73" width="5.63" height="1.70" fill="#f8f8f2" fill-opacity="0.52"/><rect x="915.54" y="162.73" width="7.03" height="1.70" fill="#ae81ff" fill-opacity="0.60"/><rect x="909.91" y="166.25" width="4.92" height="1.70" fill="#f8f8f2" fill-opacity="0.52"/><rect x="915.54" y="166.25" width="5.63" height="1.70" fill="#ae81ff" fill-opacity="0.60"/><rect x="902.88" y="171.87" width="2.11" height="1.70" fill="#f8f8f2" fill-opacity="0.52"/><rect x="905.69" y="175.04" width="9.85" height="1.70" fill="#f8f8f2" fill-opacity="0.52"/><rect x="915.54" y="175.04" width="5.63" height="1.70" fill="#ae81ff" fill-opacity="0.60"/><rect x="909.91" y="178.20" width="5.63" height="1.70" fill="#f8f8f2" fill-opacity="0.52"/><rect x="915.54" y="178.20" width="7.03" height="1.70" fill="#ae81ff" fill-opacity="0.60"/><rect x="909.91" y="181.72" width="4.92" height="1.70" fill="#f8f8f2" fill-opacity="0.52"/><rect x="915.54" y="181.72" width="5.63" height="1.70" fill="#ae81ff" fill-opacity="0.60"/><rect x="902.17" y="186.67" width="2.81" height="1.70" fill="#f8f8f2" fill-opacity="0.52"/><rect x="905.69" y="190.18" width="6.84" height="1.70" fill="#f8f8f2" fill-opacity="0.52"/><rect x="913.42" y="190.18" width="2.12" height="1.70" fill="#f8f8f2" fill-opacity="0.52"/><rect x="915.54" y="190.18" width="4.92" height="1.70" fill="#ae81ff" fill-opacity="0.60"/><rect x="909.91" y="194.75" width="6.24" height="1.70" fill="#f8f8f2" fill-opacity="0.52"/><rect x="917.03" y="194.75" width="6.95" height="1.70" fill="#f8f8f2" fill-opacity="0.52"/><rect x="905.69" y="197.21" width="2.11" height="1.70" fill="#f8f8f2" fill-opacity="0.52"/><rect x="902.17" y="200.03" width="2.81" height="1.70" fill="#f8f8f2" fill-opacity="0.52"/><rect x="905.69" y="203.54" width="7.58" height="1.70" fill="#f8f8f2" fill-opacity="0.52"/><rect x="914.15" y="203.54" width="1.39" height="1.70" fill="#f8f8f2" fill-opacity="0.52"/><rect x="915.54" y="203.54" width="4.92" height="1.70" fill="#ae81ff" fill-opacity="0.60"/><rect x="909.91" y="207.76" width="11.64" height="1.70" fill="#f8f8f2" fill-opacity="0.52"/><rect x="922.43" y="207.76" width="1.54" height="1.70" fill="#f8f8f2" fill-opacity="0.52"/><rect x="905.69" y="210.58" width="2.11" height="1.70" fill="#f8f8f2" fill-opacity="0.52"/><rect x="902.17" y="212.33" width="2.11" height="1.70" fill="#f8f8f2" fill-opacity="0.52"/><rect x="898.66" y="214.09" width="2.81" height="1.70" fill="#f8f8f2" fill-opacity="0.52"/><rect x="895.85" y="216.20" width="2.81" height="1.70" fill="#f8f8f2" fill-opacity="0.52"/><rect x="892.33" y="217.96" width="2.11" height="1.70" fill="#f8f8f2" fill-opacity="0.52"/><rect x="892.33" y="223.96" width="2.81" height="1.70" fill="#66d9ef" fill-opacity="0.60"/><rect x="896.55" y="223.96" width="12.66" height="1.70" fill="#a6e22e" fill-opacity="0.60"/><rect x="911.32" y="223.96" width="7.84" height="1.70" fill="#66d9ef" fill-opacity="0.60"/><rect x="920.03" y="223.96" width="1.13" height="1.70" fill="#66d9ef" fill-opacity="0.60"/><rect x="921.86" y="223.96" width="1.41" height="1.70" fill="#f8f8f2" fill-opacity="0.52"/><rect x="895.14" y="226.42" width="4.92" height="1.70" fill="#f92672" fill-opacity="0.60"/><rect x="900.06" y="226.42" width="9.28" height="1.70" fill="#66d9ef" fill-opacity="0.60"/><rect x="910.23" y="226.42" width="2.49" height="1.70" fill="#66d9ef" fill-opacity="0.60"/><rect x="912.72" y="226.42" width="6.33" height="1.70" fill="#fd971f" fill-opacity="0.60"/><rect x="919.05" y="226.42" width="6.33" height="1.70" fill="#66d9ef" fill-opacity="0.60"/><rect x="902.88" y="228.18" width="6.33" height="1.70" fill="#f8f8f2" fill-opacity="0.52"/><rect x="906.39" y="231.35" width="5.43" height="1.70" fill="#f8f8f2" fill-opacity="0.52"/><rect x="912.70" y="231.35" width="6.35" height="1.70" fill="#f8f8f2" fill-opacity="0.52"/><rect x="921.16" y="231.35" width="5.63" height="1.70" fill="#fd971f" fill-opacity="0.60"/><rect x="928.19" y="231.35" width="8.44" height="1.70" fill="#66d9ef" fill-opacity="0.60"/><rect x="936.63" y="231.35" width="11.77" height="1.70" fill="#e6db74" fill-opacity="0.58"/><rect x="949.29" y="231.35" width="5.63" height="1.70" fill="#e6db74" fill-opacity="0.58"/><rect x="906.39" y="233.10" width="9.14" height="1.70" fill="#f8f8f2" fill-opacity="0.52"/><rect x="915.54" y="233.10" width="11.57" height="1.70" fill="#66d9ef" fill-opacity="0.60"/><rect x="927.99" y="233.10" width="3.72" height="1.70" fill="#66d9ef" fill-opacity="0.60"/><rect x="902.88" y="236.27" width="6.33" height="1.70" fill="#66d9ef" fill-opacity="0.60"/><rect x="906.39" y="238.73" width="5.02" height="1.70" fill="#f8f8f2" fill-opacity="0.52"/><rect x="912.29" y="238.73" width="5.21" height="1.70" fill="#f8f8f2" fill-opacity="0.52"/><rect x="918.38" y="238.73" width="1.38" height="1.70" fill="#f8f8f2" fill-opacity="0.52"/><rect x="921.16" y="238.73" width="6.33" height="1.70" fill="#fd971f" fill-opacity="0.60"/><rect x="928.19" y="238.73" width="7.03" height="1.70" fill="#66d9ef" fill-opacity="0.60"/><rect x="935.23" y="238.73" width="10.61" height="1.70" fill="#e6db74" fill-opacity="0.58"/><rect x="946.72" y="238.73" width="8.20" height="1.70" fill="#e6db74" fill-opacity="0.58"/><rect x="902.17" y="242.25" width="2.11" height="1.70" fill="#f8f8f2" fill-opacity="0.52"/><rect x="895.85" y="245.76" width="7.74" height="1.70" fill="#f92672" fill-opacity="0.60"/><rect x="900.06" y="247.87" width="8.44" height="1.70" fill="#66d9ef" fill-opacity="0.60"/><rect x="908.50" y="247.87" width="5.05" height="1.70" fill="#e6db74" fill-opacity="0.58"/><rect x="914.43" y="247.87" width="4.11" height="1.70" fill="#e6db74" fill-opacity="0.58"/><rect x="919.43" y="247.87" width="11.77" height="1.70" fill="#e6db74" fill-opacity="0.58"/><rect x="932.07" y="247.87" width="7.37" height="1.70" fill="#e6db74" fill-opacity="0.58"/><rect x="939.45" y="247.87" width="9.85" height="1.70" fill="#66d9ef" fill-opacity="0.60"/><rect x="902.88" y="251.39" width="5.63" height="1.70" fill="#fd971f" fill-opacity="0.60"/><rect x="908.50" y="251.39" width="7.47" height="1.70" fill="#66d9ef" fill-opacity="0.60"/><rect x="916.85" y="251.39" width="12.75" height="1.70" fill="#66d9ef" fill-opacity="0.60"/><rect x="929.60" y="251.39" width="10.55" height="1.70" fill="#e6db74" fill-opacity="0.58"/><rect x="940.85" y="251.39" width="5.69" height="1.70" fill="#e6db74" fill-opacity="0.58"/><rect x="947.42" y="251.39" width="7.50" height="1.70" fill="#e6db74" fill-opacity="0.58"/><rect x="899.36" y="254.20" width="2.81" height="1.70" fill="#f8f8f2" fill-opacity="0.52"/><rect x="902.88" y="255.61" width="5.92" height="1.70" fill="#66d9ef" fill-opacity="0.60"/><rect x="909.68" y="255.61" width="8.67" height="1.70" fill="#66d9ef" fill-opacity="0.60"/><rect x="919.05" y="255.61" width="6.07" height="1.70" fill="#e6db74" fill-opacity="0.58"/><rect x="926.01" y="255.61" width="7.35" height="1.70" fill="#e6db74" fill-opacity="0.58"/><rect x="934.24" y="255.61" width="5.05" height="1.70" fill="#e6db74" fill-opacity="0.58"/><rect x="940.17" y="255.61" width="10.53" height="1.70" fill="#e6db74" fill-opacity="0.58"/><rect x="950.70" y="255.61" width="3.52" height="1.70" fill="#f8f8f2" fill-opacity="0.52"/><rect x="902.88" y="257.72" width="4.22" height="1.70" fill="#fd971f" fill-opacity="0.60"/><rect x="907.10" y="257.72" width="8.67" height="1.70" fill="#e6db74" fill-opacity="0.58"/><rect x="916.64" y="257.72" width="11.23" height="1.70" fill="#e6db74" fill-opacity="0.58"/><rect x="928.76" y="257.72" width="7.37" height="1.70" fill="#e6db74" fill-opacity="0.58"/><rect x="937.00" y="257.72" width="10.88" height="1.70" fill="#e6db74" fill-opacity="0.58"/><rect x="947.88" y="257.72" width="8.01" height="1.70" fill="#e6db74" fill-opacity="0.58"/><rect x="956.78" y="257.72" width="8.25" height="1.70" fill="#e6db74" fill-opacity="0.58"/><rect x="965.91" y="257.72" width="9.40" height="1.70" fill="#e6db74" fill-opacity="0.58"/><rect x="899.36" y="261.26" width="2.11" height="1.70" fill="#f8f8f2" fill-opacity="0.52"/><rect x="895.85" y="263.02" width="1.41" height="1.70" fill="#f8f8f2" fill-opacity="0.52"/><rect x="892.33" y="265.13" width="2.11" height="1.70" fill="#f8f8f2" fill-opacity="0.52"/><rect x="892.33" y="268.64" width="2.81" height="1.70" fill="#66d9ef" fill-opacity="0.60"/><rect x="896.55" y="268.64" width="11.25" height="1.70" fill="#a6e22e" fill-opacity="0.60"/><rect x="910.61" y="268.64" width="6.33" height="1.70" fill="#66d9ef" fill-opacity="0.60"/><rect x="917.65" y="268.64" width="2.81" height="1.70" fill="#f8f8f2" fill-opacity="0.52"/><rect x="899.36" y="270.40" width="9.85" height="1.70" fill="#66d9ef" fill-opacity="0.60"/><rect x="909.21" y="270.40" width="6.33" height="1.70" fill="#fd971f" fill-opacity="0.60"/><rect x="915.54" y="270.40" width="5.63" height="1.70" fill="#66d9ef" fill-opacity="0.60"/><rect x="921.16" y="270.40" width="8.15" height="1.70" fill="#e6db74" fill-opacity="0.58"/><rect x="930.19" y="270.40" width="2.22" height="1.70" fill="#e6db74" fill-opacity="0.58"/><rect x="933.82" y="270.40" width="4.22" height="1.70" fill="#f8f8f2" fill-opacity="0.52"/><rect x="939.45" y="270.40" width="4.85" height="1.70" fill="#66d9ef" fill-opacity="0.60"/><rect x="945.17" y="270.40" width="4.82" height="1.70" fill="#66d9ef" fill-opacity="0.60"/><rect x="900.06" y="274.27" width="5.99" height="1.70" fill="#f92672" fill-opacity="0.60"/><rect x="906.93" y="274.27" width="2.27" height="1.70" fill="#f92672" fill-opacity="0.60"/><rect x="909.91" y="274.27" width="6.33" height="1.70" fill="#66d9ef" fill-opacity="0.60"/><rect x="916.94" y="274.27" width="8.06" height="1.70" fill="#e6db74" fill-opacity="0.58"/><rect x="925.88" y="274.27" width="5.83" height="1.70" fill="#e6db74" fill-opacity="0.58"/><rect x="932.41" y="274.27" width="6.33" height="1.70" fill="#66d9ef" fill-opacity="0.60"/><rect x="902.88" y="277.79" width="6.33" height="1.70" fill="#fd971f" fill-opacity="0.60"/><rect x="909.91" y="277.79" width="7.03" height="1.70" fill="#66d9ef" fill-opacity="0.60"/><rect x="916.94" y="277.79" width="8.90" height="1.70" fill="#e6db74" fill-opacity="0.58"/><rect x="926.72" y="277.79" width="8.04" height="1.70" fill="#e6db74" fill-opacity="0.58"/><rect x="935.65" y="277.79" width="8.10" height="1.70" fill="#e6db74" fill-opacity="0.58"/><rect x="944.62" y="277.79" width="9.54" height="1.70" fill="#e6db74" fill-opacity="0.58"/><rect x="955.05" y="277.79" width="4.79" height="1.70" fill="#e6db74" fill-opacity="0.58"/><rect x="895.85" y="282.71" width="2.81" height="1.70" fill="#f8f8f2" fill-opacity="0.52"/><rect x="900.06" y="283.76" width="7.82" height="1.70" fill="#66d9ef" fill-opacity="0.60"/><rect x="908.77" y="283.76" width="1.14" height="1.70" fill="#66d9ef" fill-opacity="0.60"/><rect x="910.61" y="283.76" width="9.59" height="1.70" fill="#e6db74" fill-opacity="0.58"/><rect x="921.09" y="283.76" width="11.01" height="1.70" fill="#e6db74" fill-opacity="0.58"/><rect x="932.98" y="283.76" width="11.54" height="1.70" fill="#e6db74" fill-opacity="0.58"/><rect x="945.40" y="283.76" width="6.08" height="1.70" fill="#e6db74" fill-opacity="0.58"/><rect x="952.35" y="283.76" width="6.08" height="1.70" fill="#e6db74" fill-opacity="0.58"/><rect x="959.14" y="283.76" width="11.95" height="1.70" fill="#66d9ef" fill-opacity="0.60"/><rect x="900.06" y="285.52" width="6.33" height="1.70" fill="#fd971f" fill-opacity="0.60"/><rect x="906.39" y="285.52" width="5.10" height="1.70" fill="#e6db74" fill-opacity="0.58"/><rect x="912.37" y="285.52" width="4.97" height="1.70" fill="#e6db74" fill-opacity="0.58"/><rect x="918.22" y="285.52" width="4.34" height="1.70" fill="#e6db74" fill-opacity="0.58"/><rect x="923.97" y="285.52" width="4.58" height="1.70" fill="#e6db74" fill-opacity="0.58"/><rect x="929.44" y="285.52" width="5.93" height="1.70" fill="#e6db74" fill-opacity="0.58"/><rect x="936.24" y="285.52" width="4.58" height="1.70" fill="#e6db74" fill-opacity="0.58"/><rect x="941.71" y="285.52" width="9.36" height="1.70" fill="#e6db74" fill-opacity="0.58"/><rect x="951.94" y="285.52" width="6.49" height="1.70" fill="#e6db74" fill-opacity="0.58"/><rect x="896.55" y="287.63" width="2.11" height="1.70" fill="#f8f8f2" fill-opacity="0.52"/><rect x="900.06" y="289.39" width="5.24" height="1.70" fill="#e6db74" fill-opacity="0.58"/><rect x="906.18" y="289.39" width="9.73" height="1.70" fill="#e6db74" fill-opacity="0.58"/><rect x="916.79" y="289.39" width="9.28" height="1.70" fill="#e6db74" fill-opacity="0.58"/><rect x="926.95" y="289.39" width="4.76" height="1.70" fill="#e6db74" fill-opacity="0.58"/><rect x="931.71" y="289.39" width="10.55" height="1.70" fill="#66d9ef" fill-opacity="0.60"/><rect x="900.06" y="291.15" width="11.74" height="1.70" fill="#e6db74" fill-opacity="0.58"/><rect x="912.69" y="291.15" width="5.76" height="1.70" fill="#e6db74" fill-opacity="0.58"/><rect x="919.32" y="291.15" width="11.62" height="1.70" fill="#e6db74" fill-opacity="0.58"/><rect x="931.82" y="291.15" width="7.19" height="1.70" fill="#e6db74" fill-opacity="0.58"/><rect x="939.89" y="291.15" width="2.37" height="1.70" fill="#e6db74" fill-opacity="0.58"/><rect x="942.26" y="291.15" width="11.92" height="1.70" fill="#e6db74" fill-opacity="0.58"/><rect x="955.06" y="291.15" width="2.67" height="1.70" fill="#e6db74" fill-opacity="0.58"/><rect x="895.85" y="293.26" width="2.11" height="1.70" fill="#f8f8f2" fill-opacity="0.52"/><rect x="892.33" y="295.01" width="2.11" height="1.70" fill="#f8f8f2" fill-opacity="0.52"/><rect x="896.55" y="300.31" width="8.12" height="1.70" fill="#e6db74" fill-opacity="0.58"/><rect x="905.55" y="300.31" width="1.54" height="1.70" fill="#e6db74" fill-opacity="0.58"/><rect x="907.10" y="300.31" width="5.57" height="1.70" fill="#66d9ef" fill-opacity="0.60"/><rect x="913.54" y="300.31" width="6.55" height="1.70" fill="#66d9ef" fill-opacity="0.60"/><rect x="920.97" y="300.31" width="5.11" height="1.70" fill="#66d9ef" fill-opacity="0.60"/><rect x="900.06" y="302.07" width="4.16" height="1.70" fill="#f8f8f2" fill-opacity="0.52"/><rect x="905.10" y="302.07" width="6.22" height="1.70" fill="#f8f8f2" fill-opacity="0.52"/><rect x="911.32" y="302.07" width="4.92" height="1.70" fill="#ae81ff" fill-opacity="0.60"/><rect x="895.85" y="304.18" width="2.81" height="1.70" fill="#f8f8f2" fill-opacity="0.52"/><rect x="895.85" y="308.05" width="4.22" height="1.70" fill="#f8f8f2" fill-opacity="0.52"/><rect x="900.06" y="308.05" width="7.03" height="1.70" fill="#66d9ef" fill-opacity="0.60"/><rect x="907.10" y="308.05" width="8.10" height="1.70" fill="#e6db74" fill-opacity="0.58"/><rect x="916.08" y="308.05" width="6.49" height="1.70" fill="#e6db74" fill-opacity="0.58"/><rect x="923.27" y="308.05" width="6.33" height="1.70" fill="#e6db74" fill-opacity="0.58"/><rect x="930.30" y="308.05" width="10.55" height="1.70" fill="#66d9ef" fill-opacity="0.60"/><rect x="900.06" y="309.81" width="11.77" height="1.70" fill="#e6db74" fill-opacity="0.58"/><rect x="912.72" y="309.81" width="5.63" height="1.70" fill="#e6db74" fill-opacity="0.58"/><rect x="895.85" y="311.57" width="2.11" height="1.70" fill="#f8f8f2" fill-opacity="0.52"/><rect x="892.33" y="313.68" width="2.11" height="1.70" fill="#f8f8f2" fill-opacity="0.52"/><rect x="892.33" y="317.19" width="2.81" height="1.70" fill="#66d9ef" fill-opacity="0.60"/><rect x="896.55" y="317.19" width="6.16" height="1.70" fill="#a6e22e" fill-opacity="0.60"/><rect x="903.59" y="317.19" width="2.80" height="1.70" fill="#a6e22e" fill-opacity="0.60"/><rect x="907.80" y="317.19" width="8.44" height="1.70" fill="#66d9ef" fill-opacity="0.60"/><rect x="916.94" y="317.19" width="3.52" height="1.70" fill="#f8f8f2" fill-opacity="0.52"/><rect x="896.55" y="318.95" width="7.03" height="1.70" fill="#f92672" fill-opacity="0.60"/><rect x="903.58" y="318.95" width="6.07" height="1.70" fill="#66d9ef" fill-opacity="0.60"/><rect x="910.53" y="318.95" width="5.01" height="1.70" fill="#66d9ef" fill-opacity="0.60"/><rect x="900.06" y="321.06" width="9.14" height="1.70" fill="#fd971f" fill-opacity="0.60"/><rect x="909.21" y="321.06" width="9.14" height="1.70" fill="#66d9ef" fill-opacity="0.60"/><rect x="918.35" y="321.06" width="10.55" height="1.70" fill="#66d9ef" fill-opacity="0.60"/><rect x="902.88" y="323.17" width="4.72" height="1.70" fill="#fd971f" fill-opacity="0.60"/><rect x="908.47" y="323.17" width="1.44" height="1.70" fill="#fd971f" fill-opacity="0.60"/><rect x="909.91" y="323.17" width="9.14" height="1.70" fill="#66d9ef" fill-opacity="0.60"/><rect x="906.39" y="325.28" width="3.52" height="1.70" fill="#f8f8f2" fill-opacity="0.52"/><rect x="909.91" y="327.39" width="5.63" height="1.70" fill="#f8f8f2" fill-opacity="0.52"/><rect x="915.54" y="327.39" width="9.85" height="1.70" fill="#e6db74" fill-opacity="0.58"/><rect x="909.91" y="329.85" width="6.33" height="1.70" fill="#f8f8f2" fill-opacity="0.52"/><rect x="916.24" y="329.85" width="9.14" height="1.70" fill="#e6db74" fill-opacity="0.58"/><rect x="909.91" y="331.96" width="4.67" height="1.70" fill="#f8f8f2" fill-opacity="0.52"/><rect x="915.46" y="331.96" width="9.22" height="1.70" fill="#f8f8f2" fill-opacity="0.52"/><rect x="924.68" y="331.96" width="4.53" height="1.70" fill="#e6db74" fill-opacity="0.58"/><rect x="930.09" y="331.96" width="1.62" height="1.70" fill="#e6db74" fill-opacity="0.58"/><rect x="906.39" y="335.48" width="7.63" height="1.70" fill="#f8f8f2" fill-opacity="0.52"/><rect x="914.90" y="335.48" width="1.34" height="1.70" fill="#f8f8f2" fill-opacity="0.52"/><rect x="909.91" y="338.31" width="5.63" height="1.70" fill="#f8f8f2" fill-opacity="0.52"/><rect x="915.54" y="338.31" width="11.41" height="1.70" fill="#e6db74" fill-opacity="0.58"/><rect x="927.83" y="338.31" width="6.14" height="1.70" fill="#e6db74" fill-opacity="0.58"/><rect x="934.85" y="338.31" width="1.78" height="1.70" fill="#e6db74" fill-opacity="0.58"/><rect x="909.91" y="340.78" width="7.03" height="1.70" fill="#f8f8f2" fill-opacity="0.52"/><rect x="916.94" y="340.78" width="5.91" height="1.70" fill="#e6db74" fill-opacity="0.58"/><rect x="923.73" y="340.78" width="4.88" height="1.70" fill="#e6db74" fill-opacity="0.58"/><rect x="929.49" y="340.78" width="5.29" height="1.70" fill="#e6db74" fill-opacity="0.58"/><rect x="935.66" y="340.78" width="5.20" height="1.70" fill="#e6db74" fill-opacity="0.58"/><rect x="909.91" y="342.89" width="7.03" height="1.70" fill="#f8f8f2" fill-opacity="0.52"/><rect x="916.94" y="342.89" width="6.50" height="1.70" fill="#e6db74" fill-opacity="0.58"/><rect x="924.32" y="342.89" width="6.44" height="1.70" fill="#e6db74" fill-opacity="0.58"/><rect x="931.64" y="342.89" width="3.59" height="1.70" fill="#e6db74" fill-opacity="0.58"/><rect x="906.39" y="346.40" width="6.32" height="1.70" fill="#f8f8f2" fill-opacity="0.52"/><rect x="913.59" y="346.40" width="1.94" height="1.70" fill="#f8f8f2" fill-opacity="0.52"/><rect x="915.54" y="346.40" width="5.42" height="1.70" fill="#66d9ef" fill-opacity="0.60"/><rect x="921.84" y="346.40" width="6.36" height="1.70" fill="#66d9ef" fill-opacity="0.60"/><rect x="928.19" y="346.40" width="4.15" height="1.70" fill="#e6db74" fill-opacity="0.58"/><rect x="933.22" y="346.40" width="6.00" height="1.70" fill="#e6db74" fill-opacity="0.58"/><rect x="940.10" y="346.40" width="2.16" height="1.70" fill="#e6db74" fill-opacity="0.58"/><rect x="909.91" y="349.21" width="9.86" height="1.70" fill="#e6db74" fill-opacity="0.58"/><rect x="920.65" y="349.21" width="8.41" height="1.70" fill="#e6db74" fill-opacity="0.58"/><rect x="929.94" y="349.21" width="3.88" height="1.70" fill="#e6db74" fill-opacity="0.58"/><rect x="933.82" y="349.21" width="7.80" height="1.70" fill="#f8f8f2" fill-opacity="0.52"/><rect x="942.50" y="349.21" width="8.20" height="1.70" fill="#f8f8f2" fill-opacity="0.52"/><rect x="902.88" y="352.73" width="3.52" height="1.70" fill="#f92672" fill-opacity="0.60"/><rect x="906.39" y="356.25" width="9.14" height="1.70" fill="#f92672" fill-opacity="0.60"/><rect x="915.54" y="356.25" width="5.63" height="1.70" fill="#fd971f" fill-opacity="0.60"/><rect x="921.16" y="356.25" width="7.96" height="1.70" fill="#66d9ef" fill-opacity="0.60"/><rect x="930.00" y="356.25" width="2.41" height="1.70" fill="#66d9ef" fill-opacity="0.60"/><rect x="932.41" y="356.25" width="7.14" height="1.70" fill="#e6db74" fill-opacity="0.58"/><rect x="940.44" y="356.25" width="8.85" height="1.70" fill="#e6db74" fill-opacity="0.58"/><rect x="909.91" y="360.11" width="6.33" height="1.70" fill="#f8f8f2" fill-opacity="0.52"/><rect x="916.24" y="360.11" width="7.74" height="1.70" fill="#66d9ef" fill-opacity="0.60"/><rect x="923.97" y="360.11" width="6.74" height="1.70" fill="#e6db74" fill-opacity="0.58"/><rect x="931.60" y="360.11" width="10.66" height="1.70" fill="#e6db74" fill-opacity="0.58"/><rect x="943.13" y="360.11" width="4.75" height="1.70" fill="#e6db74" fill-opacity="0.58"/><rect x="909.91" y="361.87" width="9.09" height="1.70" fill="#66d9ef" fill-opacity="0.60"/><rect x="919.88" y="361.87" width="3.39" height="1.70" fill="#66d9ef" fill-opacity="0.60"/><rect x="906.39" y="363.98" width="1.41" height="1.70" fill="#f8f8f2" fill-opacity="0.52"/><rect x="902.88" y="365.74" width="2.11" height="1.70" fill="#f8f8f2" fill-opacity="0.52"/><rect x="902.88" y="367.85" width="4.92" height="1.70" fill="#f92672" fill-opacity="0.60"/><rect x="908.50" y="367.85" width="5.63" height="1.70" fill="#ae81ff" fill-opacity="0.60"/><rect x="899.36" y="369.61" width="2.11" height="1.70" fill="#f8f8f2" fill-opacity="0.52"/><rect x="895.85" y="371.72" width="2.81" height="1.70" fill="#f8f8f2" fill-opacity="0.52"/><rect x="892.33" y="373.48" width="2.11" height="1.70" fill="#f8f8f2" fill-opacity="0.52"/><rect x="892.33" y="377.37" width="2.81" height="1.70" fill="#66d9ef" fill-opacity="0.60"/><rect x="896.55" y="377.37" width="8.44" height="1.70" fill="#a6e22e" fill-opacity="0.60"/><rect x="907.10" y="377.37" width="11.25" height="1.70" fill="#66d9ef" fill-opacity="0.60"/><rect x="896.55" y="379.13" width="9.14" height="1.70" fill="#66d9ef" fill-opacity="0.60"/><rect x="905.69" y="379.13" width="6.26" height="1.70" fill="#e6db74" fill-opacity="0.58"/><rect x="912.83" y="379.13" width="5.94" height="1.70" fill="#e6db74" fill-opacity="0.58"/><rect x="919.64" y="379.13" width="4.33" height="1.70" fill="#e6db74" fill-opacity="0.58"/><rect x="923.97" y="379.13" width="7.68" height="1.70" fill="#66d9ef" fill-opacity="0.60"/><rect x="932.53" y="379.13" width="4.10" height="1.70" fill="#66d9ef" fill-opacity="0.60"/><rect x="936.63" y="379.13" width="7.57" height="1.70" fill="#66d9ef" fill-opacity="0.60"/><rect x="945.08" y="379.13" width="1.40" height="1.70" fill="#66d9ef" fill-opacity="0.60"/><rect x="900.06" y="380.89" width="6.33" height="1.70" fill="#f92672" fill-opacity="0.60"/><rect x="906.39" y="380.89" width="7.74" height="1.70" fill="#fd971f" fill-opacity="0.60"/><rect x="914.13" y="380.89" width="8.38" height="1.70" fill="#66d9ef" fill-opacity="0.60"/><rect x="923.39" y="380.89" width="5.96" height="1.70" fill="#66d9ef" fill-opacity="0.60"/><rect x="930.22" y="380.89" width="2.19" height="1.70" fill="#66d9ef" fill-opacity="0.60"/><rect x="900.06" y="383.00" width="6.33" height="1.70" fill="#fd971f" fill-opacity="0.60"/><rect x="906.39" y="383.00" width="6.85" height="1.70" fill="#66d9ef" fill-opacity="0.60"/><rect x="914.13" y="383.00" width="4.01" height="1.70" fill="#66d9ef" fill-opacity="0.60"/><rect x="919.02" y="383.00" width="7.05" height="1.70" fill="#66d9ef" fill-opacity="0.60"/><rect x="926.95" y="383.00" width="5.47" height="1.70" fill="#66d9ef" fill-opacity="0.60"/><rect x="932.41" y="383.00" width="8.02" height="1.70" fill="#e6db74" fill-opacity="0.58"/><rect x="941.32" y="383.00" width="5.61" height="1.70" fill="#e6db74" fill-opacity="0.58"/><rect x="947.80" y="383.00" width="8.04" height="1.70" fill="#e6db74" fill-opacity="0.58"/><rect x="956.72" y="383.00" width="2.42" height="1.70" fill="#e6db74" fill-opacity="0.58"/><rect x="900.06" y="385.81" width="6.11" height="1.70" fill="#e6db74" fill-opacity="0.58"/><rect x="907.06" y="385.81" width="4.72" height="1.70" fill="#e6db74" fill-opacity="0.58"/><rect x="912.66" y="385.81" width="7.20" height="1.70" fill="#e6db74" fill-opacity="0.58"/><rect x="920.73" y="385.81" width="4.33" height="1.70" fill="#e6db74" fill-opacity="0.58"/><rect x="925.95" y="385.81" width="4.18" height="1.70" fill="#e6db74" fill-opacity="0.58"/><rect x="931.01" y="385.81" width="2.81" height="1.70" fill="#e6db74" fill-opacity="0.58"/><rect x="895.85" y="390.03" width="2.11" height="1.70" fill="#f8f8f2" fill-opacity="0.52"/><rect x="892.33" y="392.14" width="2.11" height="1.70" fill="#f8f8f2" fill-opacity="0.52"/><rect x="892.33" y="396.01" width="2.81" height="1.70" fill="#66d9ef" fill-opacity="0.60"/><rect x="896.55" y="396.01" width="11.25" height="1.70" fill="#a6e22e" fill-opacity="0.60"/><rect x="909.91" y="396.01" width="7.03" height="1.70" fill="#66d9ef" fill-opacity="0.60"/><rect x="917.65" y="396.01" width="3.52" height="1.70" fill="#f8f8f2" fill-opacity="0.52"/><rect x="896.55" y="397.76" width="12.66" height="1.70" fill="#66d9ef" fill-opacity="0.60"/><rect x="909.21" y="397.76" width="7.12" height="1.70" fill="#e6db74" fill-opacity="0.58"/><rect x="917.20" y="397.76" width="5.37" height="1.70" fill="#e6db74" fill-opacity="0.58"/><rect x="922.57" y="397.76" width="11.88" height="1.70" fill="#e6db74" fill-opacity="0.58"/><rect x="935.33" y="397.76" width="1.31" height="1.70" fill="#e6db74" fill-opacity="0.58"/><rect x="938.04" y="397.76" width="9.79" height="1.70" fill="#66d9ef" fill-opacity="0.60"/><rect x="948.71" y="397.76" width="1.98" height="1.70" fill="#66d9ef" fill-opacity="0.60"/><rect x="900.06" y="399.87" width="5.63" height="1.70" fill="#fd971f" fill-opacity="0.60"/><rect x="905.69" y="399.87" width="10.68" height="1.70" fill="#66d9ef" fill-opacity="0.60"/><rect x="917.25" y="399.87" width="4.61" height="1.70" fill="#66d9ef" fill-opacity="0.60"/><rect x="921.86" y="399.87" width="9.02" height="1.70" fill="#e6db74" fill-opacity="0.58"/><rect x="931.76" y="399.87" width="9.87" height="1.70" fill="#e6db74" fill-opacity="0.58"/><rect x="942.51" y="399.87" width="1.85" height="1.70" fill="#e6db74" fill-opacity="0.58"/><rect x="896.55" y="403.39" width="2.11" height="1.70" fill="#f8f8f2" fill-opacity="0.52"/><rect x="888.81" y="472.64" width="3.52" height="1.70" fill="#66d9ef" fill-opacity="0.60"/><rect x="892.33" y="472.64" width="8.03" height="1.70" fill="#a6e22e" fill-opacity="0.60"/><rect x="901.24" y="472.64" width="11.48" height="1.70" fill="#a6e22e" fill-opacity="0.60"/><rect x="914.13" y="472.64" width="9.14" height="1.70" fill="#66d9ef" fill-opacity="0.60"/><rect x="923.97" y="472.64" width="7.74" height="1.70" fill="#f8f8f2" fill-opacity="0.52"/><rect x="892.33" y="478.27" width="3.52" height="1.70" fill="#f92672" fill-opacity="0.60"/><rect x="895.85" y="478.27" width="11.14" height="1.70" fill="#66d9ef" fill-opacity="0.60"/><rect x="907.87" y="478.27" width="3.45" height="1.70" fill="#66d9ef" fill-opacity="0.60"/><rect x="912.72" y="478.27" width="6.33" height="1.70" fill="#ae81ff" fill-opacity="0.60"/><rect x="919.76" y="478.27" width="5.84" height="1.70" fill="#f8f8f2" fill-opacity="0.52"/><rect x="926.47" y="478.27" width="5.94" height="1.70" fill="#f8f8f2" fill-opacity="0.52"/><rect x="932.41" y="478.27" width="5.06" height="1.70" fill="#66d9ef" fill-opacity="0.60"/><rect x="938.36" y="478.27" width="1.79" height="1.70" fill="#66d9ef" fill-opacity="0.60"/><rect x="940.15" y="478.27" width="4.84" height="1.70" fill="#e6db74" fill-opacity="0.58"/><rect x="945.87" y="478.27" width="10.69" height="1.70" fill="#e6db74" fill-opacity="0.58"/><rect x="957.43" y="478.27" width="4.51" height="1.70" fill="#e6db74" fill-opacity="0.58"/><rect x="895.85" y="480.03" width="9.02" height="1.70" fill="#f8f8f2" fill-opacity="0.52"/><rect x="905.75" y="480.03" width="8.38" height="1.70" fill="#f8f8f2" fill-opacity="0.52"/><rect x="899.36" y="483.54" width="9.45" height="1.70" fill="#f8f8f2" fill-opacity="0.52"/><rect x="909.69" y="483.54" width="5.85" height="1.70" fill="#f8f8f2" fill-opacity="0.52"/><rect x="892.33" y="487.41" width="3.52" height="1.70" fill="#f92672" fill-opacity="0.60"/><rect x="895.85" y="487.41" width="10.38" height="1.70" fill="#f8f8f2" fill-opacity="0.52"/><rect x="907.11" y="487.41" width="9.84" height="1.70" fill="#f8f8f2" fill-opacity="0.52"/><rect x="916.94" y="487.41" width="6.33" height="1.70" fill="#ae81ff" fill-opacity="0.60"/><rect x="924.68" y="487.41" width="8.28" height="1.70" fill="#f8f8f2" fill-opacity="0.52"/><rect x="933.84" y="487.41" width="2.79" height="1.70" fill="#f8f8f2" fill-opacity="0.52"/><rect x="936.63" y="487.41" width="4.53" height="1.70" fill="#66d9ef" fill-opacity="0.60"/><rect x="942.04" y="487.41" width="7.25" height="1.70" fill="#66d9ef" fill-opacity="0.60"/><rect x="949.29" y="487.41" width="6.02" height="1.70" fill="#e6db74" fill-opacity="0.58"/><rect x="956.19" y="487.41" width="4.60" height="1.70" fill="#e6db74" fill-opacity="0.58"/><rect x="961.66" y="487.41" width="3.10" height="1.70" fill="#e6db74" fill-opacity="0.58"/><rect x="895.85" y="489.17" width="9.83" height="1.70" fill="#f8f8f2" fill-opacity="0.52"/><rect x="906.56" y="489.17" width="5.64" height="1.70" fill="#f8f8f2" fill-opacity="0.52"/><rect x="913.08" y="489.17" width="8.08" height="1.70" fill="#f8f8f2" fill-opacity="0.52"/><rect x="892.33" y="491.63" width="1.41" height="1.70" fill="#f8f8f2" fill-opacity="0.52"/><rect x="888.81" y="493.39" width="2.81" height="1.70" fill="#f8f8f2" fill-opacity="0.52"/><rect x="888.81" y="498.66" width="3.52" height="1.70" fill="#f8f8f2" fill-opacity="0.52"/><rect x="892.33" y="498.66" width="8.44" height="1.70" fill="#66d9ef" fill-opacity="0.60"/><rect x="900.77" y="498.66" width="7.74" height="1.70" fill="#e6db74" fill-opacity="0.58"/><rect x="908.50" y="498.66" width="7.03" height="1.70" fill="#66d9ef" fill-opacity="0.60"/><rect x="916.24" y="498.66" width="4.22" height="1.70" fill="#f8f8f2" fill-opacity="0.52"/><rect x="892.33" y="500.77" width="9.14" height="1.70" fill="#66d9ef" fill-opacity="0.60"/><rect x="902.35" y="500.77" width="4.62" height="1.70" fill="#66d9ef" fill-opacity="0.60"/><rect x="907.85" y="500.77" width="5.18" height="1.70" fill="#66d9ef" fill-opacity="0.60"/><rect x="913.91" y="500.77" width="1.63" height="1.70" fill="#66d9ef" fill-opacity="0.60"/><rect x="888.81" y="504.31" width="3.52" height="1.70" fill="#f8f8f2" fill-opacity="0.52"/><rect x="890.22" y="508.18" width="6.44" height="1.70" fill="#75715e" fill-opacity="0.38"/><rect x="897.53" y="508.18" width="8.54" height="1.70" fill="#75715e" fill-opacity="0.38"/><rect x="906.96" y="508.18" width="4.10" height="1.70" fill="#75715e" fill-opacity="0.38"/><rect x="911.94" y="508.18" width="4.49" height="1.70" fill="#75715e" fill-opacity="0.38"/><rect x="917.30" y="508.18" width="8.08" height="1.70" fill="#75715e" fill-opacity="0.38"/><rect x="892.33" y="509.94" width="9.38" height="1.70" fill="#75715e" fill-opacity="0.38"/><rect x="902.59" y="509.94" width="9.54" height="1.70" fill="#75715e" fill-opacity="0.38"/><rect x="913.00" y="509.94" width="3.24" height="1.70" fill="#75715e" fill-opacity="0.38"/><rect x="899.36" y="512.05" width="6.33" height="1.70" fill="#75715e" fill-opacity="0.38"/><rect x="906.57" y="512.05" width="8.13" height="1.70" fill="#75715e" fill-opacity="0.38"/><rect x="915.58" y="512.05" width="7.72" height="1.70" fill="#75715e" fill-opacity="0.38"/><rect x="924.18" y="512.05" width="7.73" height="1.70" fill="#75715e" fill-opacity="0.38"/><rect x="932.79" y="512.05" width="4.95" height="1.70" fill="#75715e" fill-opacity="0.38"/><rect x="938.62" y="512.05" width="9.27" height="1.70" fill="#75715e" fill-opacity="0.38"/><rect x="902.88" y="514.16" width="5.59" height="1.70" fill="#75715e" fill-opacity="0.38"/><rect x="909.35" y="514.16" width="11.83" height="1.70" fill="#75715e" fill-opacity="0.38"/><rect x="922.06" y="514.16" width="8.95" height="1.70" fill="#75715e" fill-opacity="0.38"/><rect x="902.88" y="515.92" width="4.14" height="1.70" fill="#75715e" fill-opacity="0.38"/><rect x="907.90" y="515.92" width="7.67" height="1.70" fill="#75715e" fill-opacity="0.38"/><rect x="916.45" y="515.92" width="10.56" height="1.70" fill="#75715e" fill-opacity="0.38"/><rect x="927.89" y="515.92" width="7.34" height="1.70" fill="#75715e" fill-opacity="0.38"/><rect x="902.88" y="519.43" width="7.60" height="1.70" fill="#75715e" fill-opacity="0.38"/><rect x="911.35" y="519.43" width="6.15" height="1.70" fill="#75715e" fill-opacity="0.38"/><rect x="918.38" y="519.43" width="5.68" height="1.70" fill="#75715e" fill-opacity="0.38"/><rect x="924.94" y="519.43" width="12.39" height="1.70" fill="#75715e" fill-opacity="0.38"/><rect x="902.88" y="522.95" width="5.69" height="1.70" fill="#75715e" fill-opacity="0.38"/><rect x="909.44" y="522.95" width="8.65" height="1.70" fill="#75715e" fill-opacity="0.38"/><rect x="918.98" y="522.95" width="5.13" height="1.70" fill="#75715e" fill-opacity="0.38"/><rect x="924.99" y="522.95" width="8.19" height="1.70" fill="#75715e" fill-opacity="0.38"/><rect x="934.06" y="522.95" width="11.62" height="1.70" fill="#75715e" fill-opacity="0.38"/><rect x="946.56" y="522.95" width="6.24" height="1.70" fill="#75715e" fill-opacity="0.38"/><rect x="902.88" y="525.41" width="10.56" height="1.70" fill="#75715e" fill-opacity="0.38"/><rect x="914.32" y="525.41" width="8.07" height="1.70" fill="#75715e" fill-opacity="0.38"/><rect x="923.27" y="525.41" width="11.09" height="1.70" fill="#75715e" fill-opacity="0.38"/><rect x="935.24" y="525.41" width="9.63" height="1.70" fill="#75715e" fill-opacity="0.38"/><rect x="945.75" y="525.41" width="5.85" height="1.70" fill="#75715e" fill-opacity="0.38"/><rect x="952.48" y="525.41" width="11.18" height="1.70" fill="#75715e" fill-opacity="0.38"/><rect x="964.54" y="525.41" width="7.25" height="1.70" fill="#75715e" fill-opacity="0.38"/><rect x="902.88" y="527.17" width="4.20" height="1.70" fill="#75715e" fill-opacity="0.38"/><rect x="907.96" y="527.17" width="4.03" height="1.70" fill="#75715e" fill-opacity="0.38"/><rect x="912.87" y="527.17" width="7.93" height="1.70" fill="#75715e" fill-opacity="0.38"/><rect x="921.68" y="527.17" width="6.52" height="1.70" fill="#75715e" fill-opacity="0.38"/><rect x="902.88" y="529.28" width="6.42" height="1.70" fill="#75715e" fill-opacity="0.38"/><rect x="910.17" y="529.28" width="5.13" height="1.70" fill="#75715e" fill-opacity="0.38"/><rect x="916.18" y="529.28" width="6.75" height="1.70" fill="#75715e" fill-opacity="0.38"/><rect x="923.81" y="529.28" width="6.53" height="1.70" fill="#75715e" fill-opacity="0.38"/><rect x="931.22" y="529.28" width="10.72" height="1.70" fill="#75715e" fill-opacity="0.38"/><rect x="942.82" y="529.28" width="4.01" height="1.70" fill="#75715e" fill-opacity="0.38"/><rect x="947.71" y="529.28" width="10.01" height="1.70" fill="#75715e" fill-opacity="0.38"/><rect x="958.60" y="529.28" width="11.79" height="1.70" fill="#75715e" fill-opacity="0.38"/><rect x="900.06" y="532.80" width="4.96" height="1.70" fill="#75715e" fill-opacity="0.38"/><rect x="905.91" y="532.80" width="11.41" height="1.70" fill="#75715e" fill-opacity="0.38"/><rect x="918.20" y="532.80" width="9.70" height="1.70" fill="#75715e" fill-opacity="0.38"/><rect x="928.78" y="532.80" width="11.21" height="1.70" fill="#75715e" fill-opacity="0.38"/><rect x="940.87" y="532.80" width="6.32" height="1.70" fill="#75715e" fill-opacity="0.38"/><rect x="948.07" y="532.80" width="6.98" height="1.70" fill="#75715e" fill-opacity="0.38"/><rect x="955.93" y="532.80" width="7.14" height="1.70" fill="#75715e" fill-opacity="0.38"/><rect x="963.95" y="532.80" width="7.84" height="1.70" fill="#75715e" fill-opacity="0.38"/><rect x="895.85" y="536.31" width="8.71" height="1.70" fill="#75715e" fill-opacity="0.38"/><rect x="905.44" y="536.31" width="6.89" height="1.70" fill="#75715e" fill-opacity="0.38"/><rect x="913.20" y="536.31" width="3.03" height="1.70" fill="#75715e" fill-opacity="0.38"/><rect x="895.85" y="539.48" width="6.20" height="1.70" fill="#75715e" fill-opacity="0.38"/><rect x="902.93" y="539.48" width="4.39" height="1.70" fill="#75715e" fill-opacity="0.38"/><rect x="908.19" y="539.48" width="4.81" height="1.70" fill="#75715e" fill-opacity="0.38"/><rect x="913.89" y="539.48" width="10.68" height="1.70" fill="#75715e" fill-opacity="0.38"/><rect x="925.44" y="539.48" width="6.28" height="1.70" fill="#75715e" fill-opacity="0.38"/><rect x="932.61" y="539.48" width="2.62" height="1.70" fill="#75715e" fill-opacity="0.38"/><rect x="898.18" y="545.68" width="5.99" height="1.70" fill="#75715e" fill-opacity="0.38"/><rect x="905.06" y="545.68" width="6.13" height="1.70" fill="#75715e" fill-opacity="0.38"/><rect x="912.06" y="545.68" width="8.09" height="1.70" fill="#75715e" fill-opacity="0.38"/><rect x="921.03" y="545.68" width="5.52" height="1.70" fill="#75715e" fill-opacity="0.38"/><rect x="927.43" y="545.68" width="6.99" height="1.70" fill="#75715e" fill-opacity="0.38"/><rect x="935.30" y="545.68" width="9.88" height="1.70" fill="#75715e" fill-opacity="0.38"/><rect x="903.41" y="548.29" width="11.07" height="1.70" fill="#75715e" fill-opacity="0.38"/><rect x="915.36" y="548.29" width="10.50" height="1.70" fill="#75715e" fill-opacity="0.38"/><rect x="926.74" y="548.29" width="9.05" height="1.70" fill="#75715e" fill-opacity="0.38"/><rect x="936.66" y="548.29" width="3.30" height="1.70" fill="#75715e" fill-opacity="0.38"/><rect x="903.41" y="553.08" width="11.53" height="1.70" fill="#75715e" fill-opacity="0.38"/><rect x="915.81" y="553.08" width="8.39" height="1.70" fill="#75715e" fill-opacity="0.38"/><rect x="925.09" y="553.08" width="9.76" height="1.70" fill="#75715e" fill-opacity="0.38"/><rect x="935.72" y="553.08" width="2.50" height="1.70" fill="#75715e" fill-opacity="0.38"/><rect x="901.67" y="556.99" width="9.86" height="1.70" fill="#75715e" fill-opacity="0.38"/><rect x="912.40" y="556.99" width="7.61" height="1.70" fill="#75715e" fill-opacity="0.38"/><rect x="920.89" y="556.99" width="10.02" height="1.70" fill="#75715e" fill-opacity="0.38"/><rect x="931.79" y="556.99" width="9.16" height="1.70" fill="#75715e" fill-opacity="0.38"/><rect x="941.83" y="556.99" width="6.29" height="1.70" fill="#75715e" fill-opacity="0.38"/><rect x="949.00" y="556.99" width="3.15" height="1.70" fill="#75715e" fill-opacity="0.38"/><rect x="903.41" y="560.47" width="11.41" height="1.70" fill="#75715e" fill-opacity="0.38"/><rect x="915.70" y="560.47" width="5.02" height="1.70" fill="#75715e" fill-opacity="0.38"/><rect x="921.60" y="560.47" width="7.92" height="1.70" fill="#75715e" fill-opacity="0.38"/><rect x="903.41" y="562.65" width="6.75" height="1.70" fill="#75715e" fill-opacity="0.38"/><rect x="911.04" y="562.65" width="6.38" height="1.70" fill="#75715e" fill-opacity="0.38"/><rect x="918.30" y="562.65" width="9.91" height="1.70" fill="#75715e" fill-opacity="0.38"/><rect x="929.09" y="562.65" width="11.81" height="1.70" fill="#75715e" fill-opacity="0.38"/><rect x="941.78" y="562.65" width="6.08" height="1.70" fill="#75715e" fill-opacity="0.38"/><rect x="948.74" y="562.65" width="9.25" height="1.70" fill="#75715e" fill-opacity="0.38"/><rect x="958.87" y="562.65" width="6.41" height="1.70" fill="#75715e" fill-opacity="0.38"/><rect x="966.16" y="562.65" width="3.39" height="1.70" fill="#75715e" fill-opacity="0.38"/><rect x="900.80" y="565.26" width="7.15" height="1.70" fill="#75715e" fill-opacity="0.38"/><rect x="908.83" y="565.26" width="5.34" height="1.70" fill="#75715e" fill-opacity="0.38"/><rect x="915.05" y="565.26" width="5.29" height="1.70" fill="#75715e" fill-opacity="0.38"/><rect x="921.22" y="565.26" width="5.66" height="1.70" fill="#75715e" fill-opacity="0.38"/><rect x="927.77" y="565.26" width="1.75" height="1.70" fill="#75715e" fill-opacity="0.38"/><rect x="929.52" y="565.26" width="7.98" height="1.70" fill="#75715e" fill-opacity="0.25"/><rect x="938.37" y="565.26" width="5.76" height="1.70" fill="#75715e" fill-opacity="0.25"/><rect x="945.01" y="565.26" width="11.25" height="1.70" fill="#75715e" fill-opacity="0.25"/><rect x="957.14" y="565.26" width="11.97" height="1.70" fill="#75715e" fill-opacity="0.25"/><rect x="969.99" y="565.26" width="3.04" height="1.70" fill="#75715e" fill-opacity="0.25"/><rect x="897.31" y="570.05" width="5.12" height="1.70" fill="#75715e" fill-opacity="0.38"/><rect x="903.31" y="570.05" width="5.54" height="1.70" fill="#75715e" fill-opacity="0.38"/><rect x="909.73" y="570.05" width="4.73" height="1.70" fill="#75715e" fill-opacity="0.38"/><rect x="915.34" y="570.05" width="6.74" height="1.70" fill="#75715e" fill-opacity="0.38"/><rect x="922.95" y="570.05" width="4.73" height="1.70" fill="#75715e" fill-opacity="0.38"/><rect x="928.56" y="570.05" width="5.91" height="1.70" fill="#75715e" fill-opacity="0.38"/><rect x="935.35" y="570.05" width="1.13" height="1.70" fill="#75715e" fill-opacity="0.38"/><rect x="897.31" y="574.40" width="8.56" height="1.70" fill="#75715e" fill-opacity="0.38"/><rect x="906.75" y="574.40" width="11.10" height="1.70" fill="#75715e" fill-opacity="0.38"/><rect x="918.73" y="574.40" width="10.00" height="1.70" fill="#75715e" fill-opacity="0.38"/><rect x="929.61" y="574.40" width="6.00" height="1.70" fill="#75715e" fill-opacity="0.38"/><rect x="935.61" y="574.40" width="7.31" height="1.70" fill="#75715e" fill-opacity="0.25"/><rect x="943.80" y="574.40" width="8.19" height="1.70" fill="#75715e" fill-opacity="0.25"/><rect x="952.87" y="574.40" width="7.01" height="1.70" fill="#75715e" fill-opacity="0.25"/><rect x="960.77" y="574.40" width="6.71" height="1.70" fill="#75715e" fill-opacity="0.25"/><rect x="968.35" y="574.40" width="4.50" height="1.70" fill="#75715e" fill-opacity="0.25"/><rect x="973.73" y="574.40" width="1.91" height="1.70" fill="#75715e" fill-opacity="0.25"/><rect x="893.83" y="577.44" width="3.48" height="1.70" fill="#75715e" fill-opacity="0.38"/><rect x="890.35" y="579.62" width="1.74" height="1.70" fill="#f8f8f2" fill-opacity="0.52"/><rect x="890.35" y="581.80" width="8.70" height="1.70" fill="#75715e" fill-opacity="0.38"/><rect x="895.84" y="404.75" width="0.88" height="1.70" fill="#f92672" fill-opacity="0.60"/><rect x="896.72" y="404.75" width="0.88" height="1.70" fill="#f8f8f2" fill-opacity="0.52"/><rect x="897.60" y="404.75" width="7.04" height="1.70" fill="#66d9ef" fill-opacity="0.60"/><rect x="904.64" y="404.75" width="1.76" height="1.70" fill="#f8f8f2" fill-opacity="0.52"/><rect x="906.40" y="404.75" width="1.76" height="1.70" fill="#66d9ef" fill-opacity="0.60"/><rect x="908.16" y="404.75" width="0.88" height="1.70" fill="#f8f8f2" fill-opacity="0.52"/><rect x="909.04" y="404.75" width="6.16" height="1.70" fill="#e6db74" fill-opacity="0.58"/><rect x="915.20" y="404.75" width="0.88" height="1.70" fill="#f8f8f2" fill-opacity="0.52"/><rect x="916.08" y="404.75" width="21.12" height="1.70" fill="#e6db74" fill-opacity="0.58"/><rect x="937.20" y="404.75" width="0.88" height="1.70" fill="#f8f8f2" fill-opacity="0.52"/><rect x="938.96" y="404.75" width="7.04" height="1.70" fill="#66d9ef" fill-opacity="0.60"/><rect x="946.88" y="404.75" width="1.76" height="1.70" fill="#f8f8f2" fill-opacity="0.52"/><rect x="949.52" y="404.75" width="0.88" height="1.70" fill="#f8f8f2" fill-opacity="0.52"/><rect x="899.36" y="406.61" width="0.88" height="1.70" fill="#f92672" fill-opacity="0.60"/><rect x="900.24" y="406.61" width="0.88" height="1.70" fill="#f8f8f2" fill-opacity="0.52"/><rect x="901.12" y="406.61" width="3.52" height="1.70" fill="#fd971f" fill-opacity="0.60"/><rect x="904.64" y="406.61" width="1.76" height="1.70" fill="#f8f8f2" fill-opacity="0.52"/><rect x="906.40" y="406.61" width="6.16" height="1.70" fill="#66d9ef" fill-opacity="0.60"/><rect x="912.56" y="406.61" width="0.88" height="1.70" fill="#f8f8f2" fill-opacity="0.52"/><rect x="913.44" y="406.61" width="14.96" height="1.70" fill="#e6db74" fill-opacity="0.58"/><rect x="928.40" y="406.61" width="1.76" height="1.70" fill="#f8f8f2" fill-opacity="0.52"/><rect x="930.16" y="406.61" width="9.68" height="1.70" fill="#66d9ef" fill-opacity="0.60"/><rect x="939.84" y="406.61" width="0.88" height="1.70" fill="#f8f8f2" fill-opacity="0.52"/><rect x="940.72" y="406.61" width="21.12" height="1.70" fill="#e6db74" fill-opacity="0.58"/><rect x="961.84" y="406.61" width="0.88" height="1.70" fill="#f8f8f2" fill-opacity="0.52"/><rect x="895.84" y="410.33" width="1.76" height="1.70" fill="#f8f8f2" fill-opacity="0.52"/><rect x="892.32" y="412.19" width="1.76" height="1.70" fill="#f8f8f2" fill-opacity="0.52"/><rect x="892.32" y="415.91" width="2.64" height="1.70" fill="#66d9ef" fill-opacity="0.60"/><rect x="895.84" y="415.91" width="7.92" height="1.70" fill="#a6e22e" fill-opacity="0.60"/><rect x="904.64" y="415.91" width="0.88" height="1.70" fill="#f92672" fill-opacity="0.60"/><rect x="906.40" y="415.91" width="7.04" height="1.70" fill="#66d9ef" fill-opacity="0.60"/><rect x="914.32" y="415.91" width="1.76" height="1.70" fill="#f8f8f2" fill-opacity="0.52"/><rect x="916.96" y="415.91" width="0.88" height="1.70" fill="#f8f8f2" fill-opacity="0.52"/><rect x="895.84" y="417.77" width="1.76" height="1.70" fill="#f92672" fill-opacity="0.60"/><rect x="897.60" y="417.77" width="0.88" height="1.70" fill="#f8f8f2" fill-opacity="0.52"/><rect x="898.48" y="417.77" width="0.88" height="1.70" fill="#f92672" fill-opacity="0.60"/><rect x="899.36" y="417.77" width="0.88" height="1.70" fill="#f8f8f2" fill-opacity="0.52"/><rect x="900.24" y="417.77" width="5.28" height="1.70" fill="#66d9ef" fill-opacity="0.60"/><rect x="905.52" y="417.77" width="1.76" height="1.70" fill="#f8f8f2" fill-opacity="0.52"/><rect x="907.28" y="417.77" width="4.40" height="1.70" fill="#66d9ef" fill-opacity="0.60"/><rect x="911.68" y="417.77" width="1.76" height="1.70" fill="#f8f8f2" fill-opacity="0.52"/><rect x="914.32" y="417.77" width="0.88" height="1.70" fill="#f92672" fill-opacity="0.60"/><rect x="916.08" y="417.77" width="3.52" height="1.70" fill="#ae81ff" fill-opacity="0.60"/><rect x="920.48" y="417.77" width="0.88" height="1.70" fill="#f8f8f2" fill-opacity="0.52"/><rect x="922.24" y="417.77" width="0.88" height="1.70" fill="#f8f8f2" fill-opacity="0.52"/><rect x="899.36" y="419.63" width="0.88" height="1.70" fill="#f92672" fill-opacity="0.60"/><rect x="900.24" y="419.63" width="0.88" height="1.70" fill="#f8f8f2" fill-opacity="0.52"/><rect x="901.12" y="419.63" width="3.52" height="1.70" fill="#66d9ef" fill-opacity="0.60"/><rect x="904.64" y="419.63" width="0.88" height="1.70" fill="#f8f8f2" fill-opacity="0.52"/><rect x="905.52" y="419.63" width="0.88" height="1.70" fill="#f92672" fill-opacity="0.60"/><rect x="906.40" y="419.63" width="0.88" height="1.70" fill="#f8f8f2" fill-opacity="0.52"/><rect x="907.28" y="419.63" width="14.96" height="1.70" fill="#e6db74" fill-opacity="0.58"/><rect x="922.24" y="419.63" width="1.76" height="1.70" fill="#f8f8f2" fill-opacity="0.52"/><rect x="924.88" y="419.63" width="7.04" height="1.70" fill="#66d9ef" fill-opacity="0.60"/><rect x="932.80" y="419.63" width="0.88" height="1.70" fill="#f8f8f2" fill-opacity="0.52"/><rect x="933.68" y="419.63" width="0.88" height="1.70" fill="#fd971f" fill-opacity="0.60"/><rect x="934.56" y="419.63" width="0.88" height="1.70" fill="#f8f8f2" fill-opacity="0.52"/><rect x="935.44" y="419.63" width="0.88" height="1.70" fill="#fd971f" fill-opacity="0.60"/><rect x="936.32" y="419.63" width="1.76" height="1.70" fill="#f8f8f2" fill-opacity="0.52"/><rect x="902.88" y="421.49" width="2.64" height="1.70" fill="#f92672" fill-opacity="0.60"/><rect x="906.40" y="421.49" width="11.44" height="1.70" fill="#f8f8f2" fill-opacity="0.52"/><rect x="899.36" y="423.35" width="2.64" height="1.70" fill="#f8f8f2" fill-opacity="0.52"/><rect x="895.84" y="425.21" width="0.88" height="1.70" fill="#f8f8f2" fill-opacity="0.52"/><rect x="892.32" y="427.07" width="1.76" height="1.70" fill="#f8f8f2" fill-opacity="0.52"/><rect x="892.32" y="430.79" width="2.64" height="1.70" fill="#66d9ef" fill-opacity="0.60"/><rect x="895.84" y="430.79" width="12.32" height="1.70" fill="#a6e22e" fill-opacity="0.60"/><rect x="909.04" y="430.79" width="0.88" height="1.70" fill="#f92672" fill-opacity="0.60"/><rect x="910.80" y="430.79" width="7.04" height="1.70" fill="#66d9ef" fill-opacity="0.60"/><rect x="918.72" y="430.79" width="1.76" height="1.70" fill="#f8f8f2" fill-opacity="0.52"/><rect x="921.36" y="430.79" width="0.88" height="1.70" fill="#f8f8f2" fill-opacity="0.52"/><rect x="895.84" y="432.65" width="0.88" height="1.70" fill="#f92672" fill-opacity="0.60"/><rect x="896.72" y="432.65" width="0.88" height="1.70" fill="#f8f8f2" fill-opacity="0.52"/><rect x="897.60" y="432.65" width="7.04" height="1.70" fill="#66d9ef" fill-opacity="0.60"/><rect x="904.64" y="432.65" width="1.76" height="1.70" fill="#f8f8f2" fill-opacity="0.52"/><rect x="906.40" y="432.65" width="1.76" height="1.70" fill="#66d9ef" fill-opacity="0.60"/><rect x="908.16" y="432.65" width="0.88" height="1.70" fill="#f8f8f2" fill-opacity="0.52"/><rect x="909.04" y="432.65" width="6.16" height="1.70" fill="#e6db74" fill-opacity="0.58"/><rect x="915.20" y="432.65" width="0.88" height="1.70" fill="#f8f8f2" fill-opacity="0.52"/><rect x="916.96" y="432.65" width="22.88" height="1.70" fill="#e6db74" fill-opacity="0.58"/><rect x="939.84" y="432.65" width="0.88" height="1.70" fill="#f8f8f2" fill-opacity="0.52"/><rect x="941.60" y="432.65" width="7.04" height="1.70" fill="#66d9ef" fill-opacity="0.60"/><rect x="948.64" y="432.65" width="1.76" height="1.70" fill="#f8f8f2" fill-opacity="0.52"/><rect x="951.28" y="432.65" width="0.88" height="1.70" fill="#f8f8f2" fill-opacity="0.52"/><rect x="899.36" y="434.51" width="0.88" height="1.70" fill="#f92672" fill-opacity="0.60"/><rect x="900.24" y="434.51" width="0.88" height="1.70" fill="#f8f8f2" fill-opacity="0.52"/><rect x="901.12" y="434.51" width="3.52" height="1.70" fill="#fd971f" fill-opacity="0.60"/><rect x="904.64" y="434.51" width="1.76" height="1.70" fill="#f8f8f2" fill-opacity="0.52"/><rect x="906.40" y="434.51" width="5.28" height="1.70" fill="#66d9ef" fill-opacity="0.60"/><rect x="911.68" y="434.51" width="2.64" height="1.70" fill="#f8f8f2" fill-opacity="0.52"/><rect x="914.32" y="434.51" width="9.68" height="1.70" fill="#66d9ef" fill-opacity="0.60"/><rect x="924.00" y="434.51" width="0.88" height="1.70" fill="#f8f8f2" fill-opacity="0.52"/><rect x="924.88" y="434.51" width="25.52" height="1.70" fill="#e6db74" fill-opacity="0.58"/><rect x="950.40" y="434.51" width="0.88" height="1.70" fill="#f8f8f2" fill-opacity="0.52"/><rect x="895.84" y="436.37" width="1.76" height="1.70" fill="#f8f8f2" fill-opacity="0.52"/><rect x="892.32" y="438.23" width="1.76" height="1.70" fill="#f8f8f2" fill-opacity="0.52"/><rect x="892.32" y="441.95" width="7.04" height="1.70" fill="#66d9ef" fill-opacity="0.60"/><rect x="899.36" y="441.95" width="2.64" height="1.70" fill="#f8f8f2" fill-opacity="0.52"/><rect x="892.32" y="443.81" width="20.24" height="1.70" fill="#66d9ef" fill-opacity="0.60"/><rect x="912.56" y="443.81" width="2.64" height="1.70" fill="#f8f8f2" fill-opacity="0.52"/><rect x="892.32" y="445.67" width="14.96" height="1.70" fill="#66d9ef" fill-opacity="0.60"/><rect x="907.28" y="445.67" width="2.64" height="1.70" fill="#f8f8f2" fill-opacity="0.52"/><rect x="892.32" y="447.53" width="13.20" height="1.70" fill="#66d9ef" fill-opacity="0.60"/><rect x="905.52" y="447.53" width="2.64" height="1.70" fill="#f8f8f2" fill-opacity="0.52"/><rect x="892.32" y="449.39" width="12.32" height="1.70" fill="#66d9ef" fill-opacity="0.60"/><rect x="905.52" y="449.39" width="2.64" height="1.70" fill="#f8f8f2" fill-opacity="0.52"/><rect x="892.32" y="451.25" width="7.92" height="1.70" fill="#66d9ef" fill-opacity="0.60"/><rect x="900.24" y="451.25" width="2.64" height="1.70" fill="#f8f8f2" fill-opacity="0.52"/><rect x="892.32" y="453.11" width="10.56" height="1.70" fill="#66d9ef" fill-opacity="0.60"/><rect x="902.88" y="453.11" width="2.64" height="1.70" fill="#f8f8f2" fill-opacity="0.52"/><rect x="892.32" y="454.97" width="8.80" height="1.70" fill="#66d9ef" fill-opacity="0.60"/><rect x="901.12" y="454.97" width="2.64" height="1.70" fill="#f8f8f2" fill-opacity="0.52"/><rect x="892.32" y="456.83" width="11.44" height="1.70" fill="#66d9ef" fill-opacity="0.60"/><rect x="903.76" y="456.83" width="2.64" height="1.70" fill="#f8f8f2" fill-opacity="0.52"/><rect x="892.32" y="458.69" width="7.92" height="1.70" fill="#66d9ef" fill-opacity="0.60"/><rect x="900.24" y="458.69" width="2.64" height="1.70" fill="#f8f8f2" fill-opacity="0.52"/><rect x="892.32" y="460.55" width="12.32" height="1.70" fill="#66d9ef" fill-opacity="0.60"/><rect x="904.64" y="460.55" width="2.64" height="1.70" fill="#f8f8f2" fill-opacity="0.52"/><rect x="888.80" y="464.27" width="2.64" height="1.70" fill="#f8f8f2" fill-opacity="0.52"/></svg>
<div class="a" style="left:887.6px;top:33px;width:1.6px;height:574px;background:#1f201b"></div>
<div class="a" style="left:985.5px;top:33px;width:6.5px;height:571px;background:#393a34"></div>
<div class="a" style="left:985.5px;top:382.5px;width:6.5px;height:60px;background:#595a54"></div>
<div class="a" style="left:3.5px;top:611.8px;width:974.5px;height:6.5px;background:#393a34"></div>
<div class="a" style="left:3.8px;top:611.8px;width:577px;height:6.5px;background:#5a5c56"></div>
<div class="a" style="left:0;top:619px;width:996px;height:3px;background:#1e1f1b"></div>
</div>
<div id="status" class="a">
<svg class="a" style="left:11px;top:5px" width="16" height="11" viewBox="0 0 16 11"><rect x="0.7" y="0.7" width="14.2" height="9.6" rx="1" fill="#c2c7ce" stroke="#5a5e64" stroke-width="1.4"/><rect x="0" y="8" width="15.6" height="3" fill="#5a5e64"/></svg>
<span style="left:37px">Line 206, Column 34</span>
<span style="left:1112px;font-size:9.5px;top:4.6px">Spaces: 4</span>
<span style="left:1203px;font-size:9.5px;top:4.6px">JavaScript</span>
</div>
</body></html>
